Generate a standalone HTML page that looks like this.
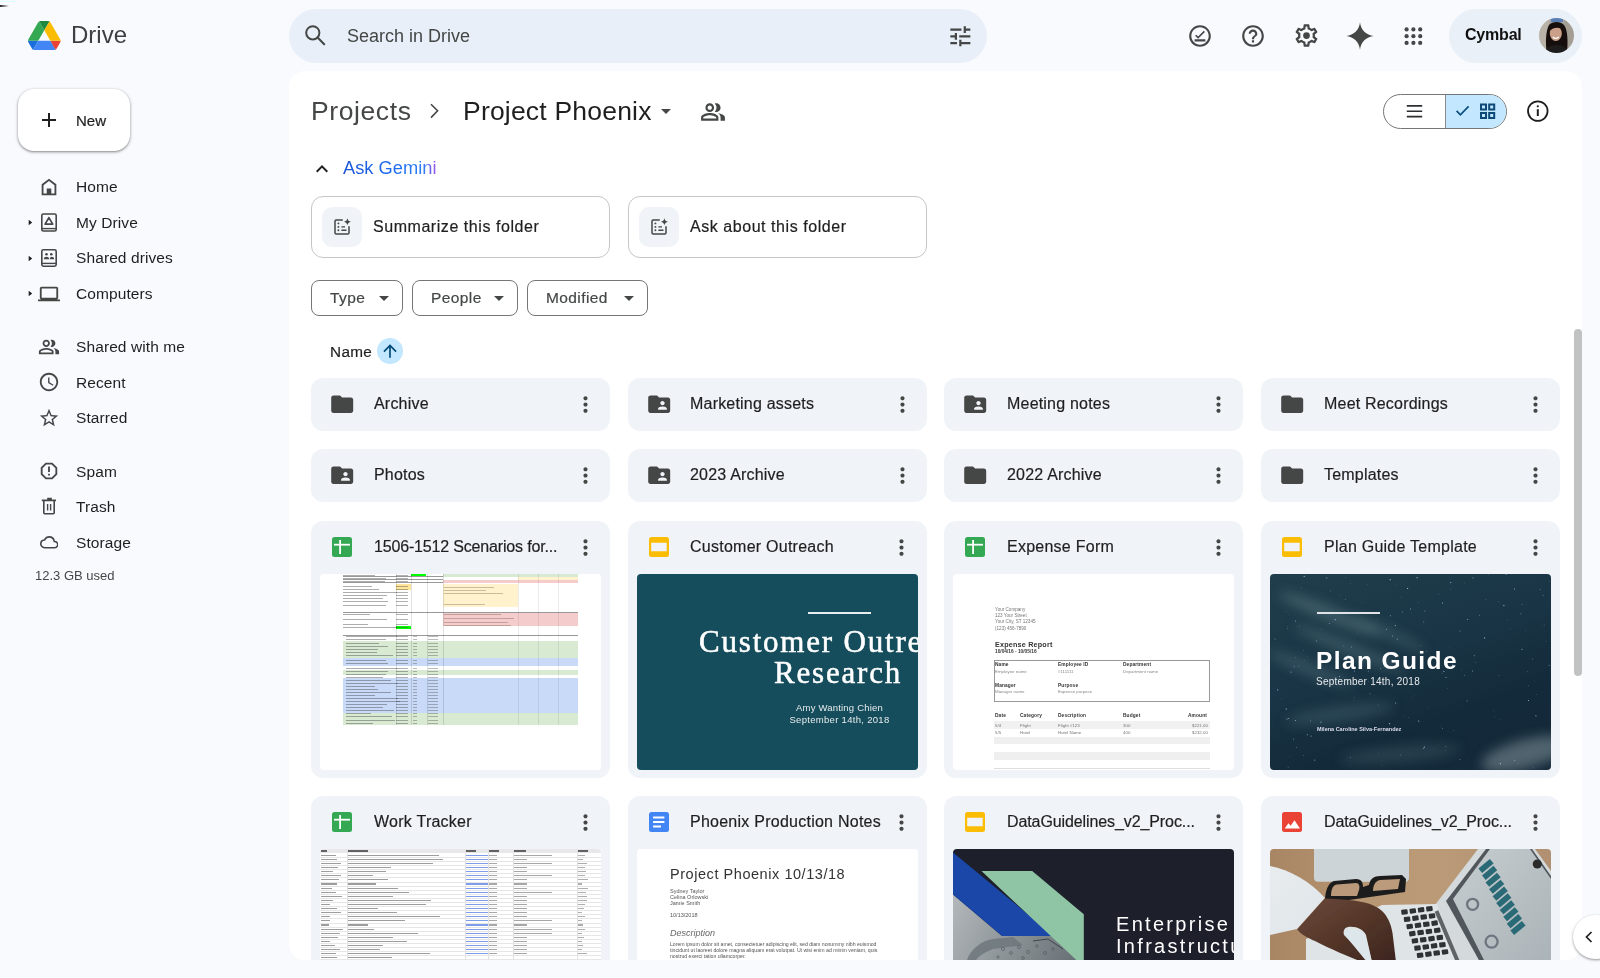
<!DOCTYPE html><html><head><meta charset="utf-8"><title>Drive</title><style>
*{margin:0;padding:0;box-sizing:border-box}
html,body{width:1600px;height:978px;overflow:hidden;background:#f8fafd;font-family:"Liberation Sans", sans-serif;}
.t{position:absolute;white-space:nowrap;line-height:1;will-change:transform;}
.m{-webkit-text-stroke:0.2px currentColor;}
.ic{position:absolute;}
.abs{position:absolute;}
.card{position:absolute;background:#f0f4f9;border-radius:12px;}
.thumb{position:absolute;overflow:hidden;border-radius:4px;}
</style></head><body>
<div class="abs" style="left:0;top:1px;width:17px;height:1px;background:#dcfdff"></div>
<div class="abs" style="left:0;top:5px;width:9px;height:2px;background:linear-gradient(90deg,#222,rgba(0,0,0,0))"></div>
<svg class="ic" style="left:28.2px;top:21px;width:32.6px;height:29.2px" viewBox="0 0 87.3 78" preserveAspectRatio="none">
<path d="m6.6 66.85 3.85 6.65c.8 1.4 1.95 2.5 3.3 3.3l13.75-23.8h-27.5c0 1.55.4 3.1 1.2 4.5z" fill="#1a6fdc"/>
<path d="m43.65 25-13.75-23.8c-1.35.8-2.5 1.9-3.3 3.3l-25.4 44a9.06 9.06 0 0 0 -1.2 4.5h27.5z" fill="#34a853"/>
<path d="m73.55 76.8c1.35-.8 2.5-1.9 3.3-3.3l1.6-2.75 7.65-13.25c.8-1.4 1.2-2.95 1.2-4.5h-27.502l5.852 11.5z" fill="#ea4335"/>
<path d="m43.65 25 13.75-23.8c-1.35-.8-2.9-1.2-4.5-1.2h-18.5c-1.6 0-3.15.45-4.5 1.2z" fill="#1e8a3e"/>
<path d="m59.8 53h-32.3l-13.75 23.8c1.35.8 2.9 1.2 4.5 1.2h50.8c1.6 0 3.15-.45 4.5-1.2z" fill="#4285f4"/>
<path d="m73.4 26.5-12.7-22c-.8-1.4-1.95-2.5-3.3-3.3l-13.75 23.8 16.15 28h27.45c0-1.55-.4-3.1-1.2-4.5z" fill="#fbbc04"/>
</svg>
<div class="t" style="left:71px;top:23.3px;font-size:24px;color:#3c4043;">Drive</div>
<div class="abs" style="left:289px;top:9px;width:698px;height:54px;border-radius:27px;background:#e9eff8"></div>
<svg class="ic" style="left:303px;top:23px;width:24px;height:24px" viewBox="0 0 24 24"><circle cx="9.8" cy="9.8" r="6.6" fill="none" stroke="#444746" stroke-width="2"/><path d="M14.6 14.6L21.2 21.2" stroke="#444746" stroke-width="2.1" stroke-linecap="round"/></svg>
<div class="t" style="left:347px;top:27.1px;font-size:18px;color:#444746;">Search in Drive</div>
<svg class="ic" style="left:946.7px;top:22.7px;width:26.7px;height:26.7px;" viewBox="0 0 24 24"><path fill="#444746" d="M3 17v2h6v-2H3zM3 5v2h10V5H3zm10 16v-2h8v-2h-8v-2h-2v6h2zM7 9v2H3v2h4v2h2V9H7zm14 4v-2H11v2h10zm-6-4h2V7h4V5h-4V3h-2v6z"/></svg>
<svg class="ic" style="left:1187px;top:23px;width:26px;height:26px;" viewBox="0 0 24 24"><path fill="#444746" d="M12 2C6.5 2 2 6.5 2 12s4.5 10 10 10 10-4.5 10-10S17.5 2 12 2zm0 18c-4.41 0-8-3.59-8-8s3.59-8 8-8 8 3.59 8 8-3.59 8-8 8zM7 17h10v-2H7v2zm3.25-4.5L8.5 10.75 7.44 11.8l2.81 2.81 6.31-6.31L15.5 7.25z"/></svg>
<svg class="ic" style="left:1240px;top:23px;width:26px;height:26px;" viewBox="0 0 24 24"><path fill="#444746" d="M11 18h2v-2h-2v2zm1-16C6.48 2 2 6.48 2 12s4.48 10 10 10 10-4.48 10-10S17.52 2 12 2zm0 18c-4.41 0-8-3.59-8-8s3.59-8 8-8 8 3.59 8 8-3.59 8-8 8zm0-14c-2.21 0-4 1.79-4 4h2c0-1.1.9-2 2-2s2 .9 2 2c0 2-3 1.75-3 5h2c0-2.25 3-2.5 3-5 0-2.21-1.79-4-4-4z"/></svg>
<svg class="ic" style="left:1293px;top:22px;width:27px;height:27px;" viewBox="0 0 24 24"><path fill="#444746" d="M19.43 12.98c.04-.32.07-.64.07-.98 0-.34-.03-.66-.07-.98l2.11-1.65c.19-.15.24-.42.12-.64l-2-3.46a.5.5 0 0 0-.61-.22l-2.49 1c-.52-.4-1.08-.73-1.69-.98l-.38-2.65A.488.488 0 0 0 14 2h-4c-.25 0-.46.18-.49.42l-.38 2.65c-.61.25-1.17.59-1.69.98l-2.49-1a.566.566 0 0 0-.18-.03c-.17 0-.34.09-.43.25l-2 3.46c-.13.22-.07.49.12.64l2.11 1.65c-.04.32-.07.65-.07.98 0 .33.03.66.07.98l-2.11 1.65c-.19.15-.24.42-.12.64l2 3.46a.5.5 0 0 0 .61.22l2.49-1c.52.4 1.08.73 1.69.98l.38 2.65c.03.24.24.42.49.42h4c.25 0 .46-.18.49-.42l.38-2.65c.61-.25 1.17-.59 1.69-.98l2.49 1c.06.02.12.03.18.03.17 0 .34-.09.43-.25l2-3.46c.12-.22.07-.49-.12-.64l-2.11-1.65zm-1.98-1.71c.04.31.05.52.05.73 0 .21-.02.43-.05.73l-.14 1.13.89.7 1.08.84-.7 1.21-1.27-.51-1.04-.42-.9.68c-.43.32-.84.56-1.25.73l-1.06.43-.16 1.13-.2 1.35h-1.4l-.19-1.35-.16-1.130-1.06-.43c-.43-.18-.83-.41-1.23-.71l-.91-.7-1.06.43-1.27.51-.7-1.21 1.08-.84.89-.7-.14-1.13c-.03-.31-.05-.54-.05-.74s.02-.43.05-.73l.14-1.13-.89-.7-1.08-.84.7-1.21 1.27.51 1.04.42.9-.68c.43-.32.84-.56 1.25-.73l1.06-.43.16-1.13.2-1.35h1.39l.19 1.35.16 1.13 1.06.43c.43.18.83.41 1.23.71l.91.7 1.060-.43 1.27-.51.7 1.21-1.07.85-.89.7.14 1.13zM12 9a3 3 0 1 0 0 6 3 3 0 0 0 0-6z"/></svg>
<svg class="ic" style="left:1344.6px;top:20.8px;width:30px;height:30px;" viewBox="0 0 24 24"><path fill="#444746" d="M12 1C12.6 7 17 11.4 23 12 17 12.6 12.6 17 12 23 11.4 17 7 12.6 1 12 7 11.4 11.4 7 12 1z"/></svg>
<svg class="ic" style="left:0;top:0;width:1600px;height:80px"><circle cx="1406.6" cy="29.4" r="2.1" fill="#444746"/><circle cx="1406.6" cy="36.15" r="2.1" fill="#444746"/><circle cx="1406.6" cy="42.9" r="2.1" fill="#444746"/><circle cx="1413.3999999999999" cy="29.4" r="2.1" fill="#444746"/><circle cx="1413.3999999999999" cy="36.15" r="2.1" fill="#444746"/><circle cx="1413.3999999999999" cy="42.9" r="2.1" fill="#444746"/><circle cx="1420.1999999999998" cy="29.4" r="2.1" fill="#444746"/><circle cx="1420.1999999999998" cy="36.15" r="2.1" fill="#444746"/><circle cx="1420.1999999999998" cy="42.9" r="2.1" fill="#444746"/></svg>
<div class="abs" style="left:1449px;top:9px;width:133px;height:54px;border-radius:27px;background:#eaf0f8"></div>
<div class="t" style="left:1465px;top:26.5px;font-size:16px;color:#111;font-weight:bold;letter-spacing:-0.2px">Cymbal</div>
<svg class="ic" style="left:1539px;top:18px;width:35px;height:35px" viewBox="0 0 35 35">
<defs><clipPath id="av"><circle cx="17.5" cy="17.5" r="17.5"/></clipPath><filter id="avb"><feGaussianBlur stdDeviation="0.5"/></filter></defs>
<g clip-path="url(#av)" filter="url(#avb)">
<rect width="35" height="35" fill="#a9a8a4"/>
<rect x="0" y="0" width="10" height="35" fill="#b9b2a8"/>
<rect x="25" y="0" width="10" height="35" fill="#a49d94"/>
<rect x="12" y="0" width="12" height="4" fill="#5a7fb5"/>
<path d="M8 35 C6 25 7 12 10 7 C13 3 22 3 25 7 C29 12 29 25 28 35Z" fill="#17110e"/>
<ellipse cx="16.8" cy="15.5" rx="6" ry="7.6" fill="#caa08a"/>
<path d="M13.8 19 Q16.8 21.8 19.8 19" stroke="#fff" stroke-width="1.2" fill="none"/>
<path d="M11 10 C13 6 22 5 25 10 L24 12 C21 9 15 9 12 12Z" fill="#17110e"/>
<path d="M5 35 C8 28 12 27 17.5 27 C23 27 27 28 30 35Z" fill="#1e1a1a"/>
</g></svg>
<div class="abs" style="left:18px;top:89px;width:112px;height:62px;border-radius:16px;background:#fff;box-shadow:0 1px 2px rgba(0,0,0,.3),0 1px 3px 1px rgba(0,0,0,.15)"></div>
<svg class="ic" style="left:37px;top:108px;width:24px;height:24px;" viewBox="0 0 24 24"><path fill="#1f1f1f" d="M19 13h-6v6h-2v-6H5v-2h6V5h2v6h6v2z"/></svg>
<div class="t m" style="left:76px;top:113.3px;font-size:15px;color:#1f1f1f;">New</div>
<svg class="ic" style="left:38px;top:176px;width:22px;height:22px;" viewBox="0 0 24 24"><path fill="#444746" d="M4 21V9l8-6 8 6v12H4zm2-2h12v-9l-6-4.5L6 10v9zm3.5 0v-5.5h5V19z"/></svg>
<div class="t" style="left:75.5px;top:179.3px;font-size:15.5px;color:#1f1f1f;letter-spacing:0.1px;">Home</div>
<svg class="ic" style="left:0;top:0;width:80px;height:300px" viewBox="0 0 80 300"><rect x="41.8" y="214" width="14.4" height="17" rx="1.6" fill="none" stroke="#444746" stroke-width="1.6"/><path d="M42 228.6h14" stroke="#444746" stroke-width="1.4"/><path d="M48.9 217.6L45.1 224.1H52.7Z" fill="none" stroke="#444746" stroke-width="1.7" stroke-linejoin="round"/></svg>
<svg class="ic" style="left:26px;top:218.0px;width:8px;height:8px" viewBox="0 0 8 8"><path fill="#1f1f1f" d="M2.7 1.7l3.5 2.8-3.5 2.8z"/></svg>
<div class="t" style="left:75.5px;top:214.8px;font-size:15.5px;color:#1f1f1f;letter-spacing:0.1px;">My Drive</div>
<svg class="ic" style="left:0;top:0;width:80px;height:300px" viewBox="0 0 80 300"><rect x="41.8" y="249.8" width="14.4" height="16.4" rx="1.6" fill="none" stroke="#444746" stroke-width="1.6"/><path d="M42 263.4h14" stroke="#444746" stroke-width="1.4"/><circle cx="46.5" cy="254.2" r="1.3" fill="#444746"/><circle cx="51.3" cy="254.2" r="1.3" fill="#444746"/><path d="M43.8 259.2c0-1.6 1.5-2.4 2.7-2.4s2.7.8 2.7 2.4zM49.8 259.2c0-1.3.8-2.4 1.9-2.4 1.2 0 2.5.8 2.5 2.4z" fill="#444746"/></svg>
<svg class="ic" style="left:26px;top:253.5px;width:8px;height:8px" viewBox="0 0 8 8"><path fill="#1f1f1f" d="M2.7 1.7l3.5 2.8-3.5 2.8z"/></svg>
<div class="t" style="left:75.5px;top:250.3px;font-size:15.5px;color:#1f1f1f;letter-spacing:0.1px;">Shared drives</div>
<svg class="ic" style="left:38px;top:282.6px;width:22px;height:22px;" viewBox="0 0 24 24"><path fill="#444746" d="M20 18c1.1 0 1.99-.9 1.99-2L22 6c0-1.1-.9-2-2-2H4c-1.1 0-2 .9-2 2v10c0 1.1.9 2 2 2H0v2h24v-2h-4zM4 6h16v10H4V6z"/></svg>
<svg class="ic" style="left:26px;top:289.1px;width:8px;height:8px" viewBox="0 0 8 8"><path fill="#1f1f1f" d="M2.7 1.7l3.5 2.8-3.5 2.8z"/></svg>
<div class="t" style="left:75.5px;top:285.9px;font-size:15.5px;color:#1f1f1f;letter-spacing:0.1px;">Computers</div>
<svg class="ic" style="left:38px;top:335.7px;width:22px;height:22px;" viewBox="0 0 24 24"><path fill="#444746" d="M16.67 13.13C18.04 14.06 19 15.32 19 17v3h4v-3c0-2.18-3.57-3.47-6.33-3.87zM15 12c2.21 0 4-1.79 4-4s-1.79-4-4-4c-.47 0-.91.1-1.33.24a5.98 5.98 0 0 1 0 7.52c.42.14.86.24 1.33.24zm-6 0c2.21 0 4-1.79 4-4s-1.79-4-4-4-4 1.79-4 4 1.790 4 4 4zm0-6c1.1 0 2 .9 2 2s-.9 2-2 2-2-.9-2-2 .9-2 2-2zm0 7c-2.67 0-8 1.34-8 4v3h16v-3c0-2.66-5.33-4-8-4zm6 5H3v-.99C3.2 16.29 6.3 15 9 15s5.8 1.29 6 2v1z"/></svg>
<div class="t" style="left:75.5px;top:339.0px;font-size:15.5px;color:#1f1f1f;letter-spacing:0.1px;">Shared with me</div>
<svg class="ic" style="left:38px;top:371.3px;width:22px;height:22px;" viewBox="0 0 24 24"><path fill="#444746" d="M11.99 2C6.47 2 2 6.48 2 12s4.47 10 9.99 10C17.52 22 22 17.52 22 12S17.52 2 11.99 2zM12 20c-4.42 0-8-3.58-8-8s3.58-8 8-8 8 3.58 8 8-3.58 8-8 8zm.5-13H11v6l5.25 3.15.75-1.23-4.5-2.67z"/></svg>
<div class="t" style="left:75.5px;top:374.6px;font-size:15.5px;color:#1f1f1f;letter-spacing:0.1px;">Recent</div>
<svg class="ic" style="left:38px;top:406.8px;width:22px;height:22px;" viewBox="0 0 24 24"><path fill="#444746" d="M22 9.24l-7.19-.62L12 2 9.19 8.63 2 9.24l5.46 4.73L5.82 21 12 17.27 18.18 21l-1.63-7.03L22 9.24zM12 15.4l-3.76 2.27 1-4.28-3.32-2.88 4.38-.38L12 6.1l1.71 4.04 4.38.38-3.32 2.88 1 4.28L12 15.4z"/></svg>
<div class="t" style="left:75.5px;top:410.1px;font-size:15.5px;color:#1f1f1f;letter-spacing:0.1px;">Starred</div>
<svg class="ic" style="left:38px;top:460.3px;width:22px;height:22px;" viewBox="0 0 24 24"><path fill="#444746" d="M15.73 3H8.27L3 8.27v7.46L8.27 21h7.46L21 15.73V8.27L15.73 3zM19 14.9L14.9 19H9.1L5 14.9V9.1L9.1 5h5.8L19 9.1v5.8zM11 7h2v6h-2zm0 8h2v2h-2z"/></svg>
<div class="t" style="left:75.5px;top:463.6px;font-size:15.5px;color:#1f1f1f;letter-spacing:0.1px;">Spam</div>
<svg class="ic" style="left:0;top:400px;width:80px;height:130px" viewBox="0 400 80 130"><path d="M41.8 500.4h14.2M47.2 498.6h4.6" stroke="#444746" stroke-width="1.6"/><path d="M43.8 501v11.8a.9.9 0 0 0 .9.9h8.6a.9.9 0 0 0 .9-.9V501" fill="none" stroke="#444746" stroke-width="1.6"/><path d="M47.6 504v6.6M50.6 504v6.6" stroke="#444746" stroke-width="1.4"/></svg>
<div class="t" style="left:75.5px;top:499.3px;font-size:15.5px;color:#1f1f1f;letter-spacing:0.1px;">Trash</div>
<svg class="ic" style="left:39.6px;top:532.6px;width:18.5px;height:18.5px;" viewBox="0 0 24 24"><path fill="#444746" d="M19.35 10.04A7.49 7.49 0 0 0 12 4C9.11 4 6.6 5.64 5.35 8.04A5.994 5.994 0 0 0 0 14c0 3.31 2.69 6 6 6h13c2.76 0 5-2.24 5-5 0-2.64-2.05-4.78-4.65-4.96zM19 18H6c-2.21 0-4-1.79-4-4 0-2.05 1.53-3.76 3.56-3.97l1.07-.11.5-.95A5.469 5.469 0 0 1 12 6c2.62 0 4.88 1.86 5.39 4.43l.3 1.5 1.53.11A2.98 2.98 0 0 1 22 15c0 1.65-1.35 3-3 3z"/></svg>
<div class="t" style="left:75.5px;top:534.8px;font-size:15.5px;color:#1f1f1f;letter-spacing:0.1px;">Storage</div>
<div class="t" style="left:35.4px;top:568.6px;font-size:13px;color:#444746;">12.3 GB used</div>
<div class="abs" style="left:289px;top:71px;width:1293px;height:889px;border-radius:16px;background:#fff"></div>
<div class="t" style="left:311px;top:97.9px;font-size:26.5px;color:#444746;letter-spacing:0.6px;">Projects</div>
<svg class="ic" style="left:423px;top:99px;width:24px;height:24px" viewBox="0 0 24 24"><path d="M8 5.2L14.6 11.8 8 18.6" fill="none" stroke="#444746" stroke-width="1.6"/></svg>
<div class="t" style="left:463px;top:97.9px;font-size:26.5px;color:#1f1f1f;letter-spacing:0.2px;">Project Phoenix</div>
<svg class="ic" style="left:654px;top:99px;width:24px;height:24px;" viewBox="0 0 24 24"><path fill="#444746" d="M7 10l5 5 5-5z"/></svg>
<svg class="ic" style="left:700px;top:99px;width:26px;height:26px;" viewBox="0 0 24 24"><path fill="#444746" d="M16.67 13.13C18.04 14.06 19 15.32 19 17v3h4v-3c0-2.18-3.57-3.47-6.33-3.87zM15 12c2.21 0 4-1.79 4-4s-1.79-4-4-4c-.47 0-.91.1-1.33.24a5.98 5.98 0 0 1 0 7.52c.42.14.86.24 1.33.24zm-6 0c2.21 0 4-1.79 4-4s-1.79-4-4-4-4 1.79-4 4 1.790 4 4 4zm0-6c1.1 0 2 .9 2 2s-.9 2-2 2-2-.9-2-2 .9-2 2-2zm0 7c-2.67 0-8 1.34-8 4v3h16v-3c0-2.66-5.33-4-8-4zm6 5H3v-.99C3.2 16.29 6.3 15 9 15s5.8 1.29 6 2v1z"/></svg>
<div class="abs" style="left:1383px;top:93.5px;width:124px;height:35.5px;border-radius:18px;border:1px solid #747775;overflow:hidden;background:#fff"><div class="abs" style="left:61px;top:0;width:62px;height:35px;background:#c2e7ff;border-left:1px solid #8a8c8b"></div></div>
<svg class="ic" style="left:0;top:0;width:1600px;height:140px" viewBox="0 0 1600 140"><path d="M1406.8 105.9h15.4M1406.8 111.2h15.4M1406.8 116.6h15.4" stroke="#2d2f31" stroke-width="1.6"/><path d="M1456.6 110.8l3.8 4 8.2-8.4" fill="none" stroke="#0b4f80" stroke-width="1.7"/><path d="M1481 104.6h5v5h-5zM1489.2 104.6h5v5h-5zM1481 112.9h5v5h-5zM1489.2 112.9h5v5h-5z" fill="none" stroke="#0b4a78" stroke-width="2"/><circle cx="1537.8" cy="111.1" r="9.8" fill="none" stroke="#1f1f1f" stroke-width="1.8"/><path d="M1537.8 109.2v6.8" stroke="#1f1f1f" stroke-width="2"/><circle cx="1537.8" cy="106.3" r="1.1" fill="#1f1f1f"/></svg>
<svg class="ic" style="left:310px;top:157px;width:24px;height:24px;" viewBox="0 0 24 24"><path fill="#1f1f1f" d="M12 8l-6 6 1.41 1.41L12 10.83l4.59 4.58L18 14z"/></svg>
<div class="t" style="left:342.5px;top:159.1px;font-size:18.3px;background:linear-gradient(90deg,#1a53d6 0%,#1b6cf0 55%,#2b7ef5 86%,#7b5cf0 96%,#9b5be8 100%);-webkit-background-clip:text;background-clip:text;color:transparent">Ask Gemini</div>
<div class="abs" style="left:311px;top:196px;width:299px;height:62px;border-radius:12px;border:1px solid #c4c7c5;background:#fff"></div><div class="abs" style="left:322px;top:207px;width:40px;height:40px;border-radius:10px;background:#f0f4f9"></div><svg class="ic" style="left:332px;top:217px;width:20px;height:20px" viewBox="0 0 20 20"><path fill="none" stroke="#444746" stroke-width="1.5" d="M10.8 3H4.2A1.2 1.2 0 0 0 3 4.2v11.6A1.2 1.2 0 0 0 4.2 17h11.6a1.2 1.2 0 0 0 1.2-1.2V9.2"/><circle cx="6.4" cy="6.4" r="0.95" fill="#444746"/><circle cx="6.4" cy="9.9" r="0.95" fill="#444746"/><circle cx="6.4" cy="13.3" r="0.95" fill="#444746"/><path fill="#444746" d="M9.4 9.2h3.6v1.4H9.4zm0 3.4h5.1v1.4H9.4z"/><path fill="#444746" d="M15.4 1.3Q15.9 4.3 18.9 4.8 15.9 5.3 15.4 8.3 14.9 5.3 11.9 4.8 14.9 4.3 15.4 1.3Z"/></svg><div class="t m" style="left:373px;top:218.8px;font-size:16px;color:#1f1f1f;letter-spacing:0.55px;">Summarize this folder</div>
<div class="abs" style="left:628px;top:196px;width:299px;height:62px;border-radius:12px;border:1px solid #c4c7c5;background:#fff"></div><div class="abs" style="left:639px;top:207px;width:40px;height:40px;border-radius:10px;background:#f0f4f9"></div><svg class="ic" style="left:649px;top:217px;width:20px;height:20px" viewBox="0 0 20 20"><path fill="none" stroke="#444746" stroke-width="1.5" d="M10.8 3H4.2A1.2 1.2 0 0 0 3 4.2v11.6A1.2 1.2 0 0 0 4.2 17h11.6a1.2 1.2 0 0 0 1.2-1.2V9.2"/><circle cx="6.4" cy="6.4" r="0.95" fill="#444746"/><circle cx="6.4" cy="9.9" r="0.95" fill="#444746"/><circle cx="6.4" cy="13.3" r="0.95" fill="#444746"/><path fill="#444746" d="M9.4 9.2h3.6v1.4H9.4zm0 3.4h5.1v1.4H9.4z"/><path fill="#444746" d="M15.4 1.3Q15.9 4.3 18.9 4.8 15.9 5.3 15.4 8.3 14.9 5.3 11.9 4.8 14.9 4.3 15.4 1.3Z"/></svg><div class="t m" style="left:690px;top:218.8px;font-size:16px;color:#1f1f1f;letter-spacing:0.55px;">Ask about this folder</div>
<div class="abs" style="left:311px;top:280px;width:92px;height:36px;border-radius:8px;border:1px solid #747775"></div>
<div class="t m" style="left:330px;top:290.1px;font-size:15.5px;color:#444746;letter-spacing:0.4px;">Type</div>
<svg class="ic" style="left:372px;top:286px;width:24px;height:24px;" viewBox="0 0 24 24"><path fill="#444746" d="M7 10l5 5 5-5z"/></svg>
<div class="abs" style="left:412px;top:280px;width:106px;height:36px;border-radius:8px;border:1px solid #747775"></div>
<div class="t m" style="left:431px;top:290.1px;font-size:15.5px;color:#444746;letter-spacing:0.4px;">People</div>
<svg class="ic" style="left:487px;top:286px;width:24px;height:24px;" viewBox="0 0 24 24"><path fill="#444746" d="M7 10l5 5 5-5z"/></svg>
<div class="abs" style="left:527px;top:280px;width:121px;height:36px;border-radius:8px;border:1px solid #747775"></div>
<div class="t m" style="left:546px;top:290.1px;font-size:15.5px;color:#444746;letter-spacing:0.4px;">Modified</div>
<svg class="ic" style="left:617px;top:286px;width:24px;height:24px;" viewBox="0 0 24 24"><path fill="#444746" d="M7 10l5 5 5-5z"/></svg>
<div class="t m" style="left:330px;top:344.0px;font-size:15.3px;color:#1f1f1f;letter-spacing:0.35px;">Name</div>
<div class="abs" style="left:377px;top:338px;width:26px;height:26px;border-radius:50%;background:#c2e7ff"></div>
<svg class="ic" style="left:380px;top:341px;width:20px;height:20px;" viewBox="0 0 24 24"><path fill="#004a77" d="M4 12l1.41 1.41L11 7.83V20h2V7.83l5.58 5.59L20 12l-8-8-8 8z"/></svg>
<div class="card" style="left:311px;top:378px;width:299px;height:53px"></div>
<svg class="ic" style="left:328.8px;top:391.2px;width:26.4px;height:26.4px;" viewBox="0 0 24 24"><path fill="#444746" d="M10 4H4c-1.1 0-1.99.9-1.99 2L2 18c0 1.1.9 2 2 2h16c1.1 0 2-.9 2-2V8c0-1.1-.9-2-2-2h-8l-2-2z"/></svg>
<div class="t m" style="left:373.5px;top:396.3px;font-size:16px;color:#1f1f1f;letter-spacing:0.2px;">Archive</div>
<svg class="ic" style="left:572.8px;top:392.3px;width:25px;height:25px;" viewBox="0 0 24 24"><path fill="#444746" d="M12 8c1.1 0 2-.9 2-2s-.9-2-2-2-2 .9-2 2 .9 2 2 2zm0 2c-1.1 0-2 .9-2 2s.9 2 2 2 2-.9 2-2-.9-2-2-2zm0 6c-1.1 0-2 .9-2 2s.9 2 2 2 2-.9 2-2-.9-2-2-2z"/></svg>
<div class="card" style="left:627.67px;top:378px;width:299px;height:53px"></div>
<svg class="ic" style="left:645.5px;top:391.2px;width:26.4px;height:26.4px;" viewBox="0 0 24 24"><path fill="#444746" d="M20 6h-8l-2-2H4c-1.1 0-1.99.9-1.99 2L2 18c0 1.1.9 2 2 2h16c1.1 0 2-.9 2-2V8c0-1.1-.9-2-2-2zm-5 3c1.1 0 2 .9 2 2s-.9 2-2 2-2-.9-2-2 .9-2 2-2zm4 8h-8v-1c0-1.33 2.67-2 4-2s4 .67 4 2v1z"/></svg>
<div class="t m" style="left:690.2px;top:396.3px;font-size:16px;color:#1f1f1f;letter-spacing:0.2px;">Marketing assets</div>
<svg class="ic" style="left:889.5px;top:392.3px;width:25px;height:25px;" viewBox="0 0 24 24"><path fill="#444746" d="M12 8c1.1 0 2-.9 2-2s-.9-2-2-2-2 .9-2 2 .9 2 2 2zm0 2c-1.1 0-2 .9-2 2s.9 2 2 2 2-.9 2-2-.9-2-2-2zm0 6c-1.1 0-2 .9-2 2s.9 2 2 2 2-.9 2-2-.9-2-2-2z"/></svg>
<div class="card" style="left:944.33px;top:378px;width:299px;height:53px"></div>
<svg class="ic" style="left:962.1px;top:391.2px;width:26.4px;height:26.4px;" viewBox="0 0 24 24"><path fill="#444746" d="M20 6h-8l-2-2H4c-1.1 0-1.99.9-1.99 2L2 18c0 1.1.9 2 2 2h16c1.1 0 2-.9 2-2V8c0-1.1-.9-2-2-2zm-5 3c1.1 0 2 .9 2 2s-.9 2-2 2-2-.9-2-2 .9-2 2-2zm4 8h-8v-1c0-1.33 2.67-2 4-2s4 .67 4 2v1z"/></svg>
<div class="t m" style="left:1006.8px;top:396.3px;font-size:16px;color:#1f1f1f;letter-spacing:0.2px;">Meeting notes</div>
<svg class="ic" style="left:1206.1px;top:392.3px;width:25px;height:25px;" viewBox="0 0 24 24"><path fill="#444746" d="M12 8c1.1 0 2-.9 2-2s-.9-2-2-2-2 .9-2 2 .9 2 2 2zm0 2c-1.1 0-2 .9-2 2s.9 2 2 2 2-.9 2-2-.9-2-2-2zm0 6c-1.1 0-2 .9-2 2s.9 2 2 2 2-.9 2-2-.9-2-2-2z"/></svg>
<div class="card" style="left:1261px;top:378px;width:299px;height:53px"></div>
<svg class="ic" style="left:1278.8px;top:391.2px;width:26.4px;height:26.4px;" viewBox="0 0 24 24"><path fill="#444746" d="M10 4H4c-1.1 0-1.99.9-1.99 2L2 18c0 1.1.9 2 2 2h16c1.1 0 2-.9 2-2V8c0-1.1-.9-2-2-2h-8l-2-2z"/></svg>
<div class="t m" style="left:1323.5px;top:396.3px;font-size:16px;color:#1f1f1f;letter-spacing:0.2px;">Meet Recordings</div>
<svg class="ic" style="left:1522.8px;top:392.3px;width:25px;height:25px;" viewBox="0 0 24 24"><path fill="#444746" d="M12 8c1.1 0 2-.9 2-2s-.9-2-2-2-2 .9-2 2 .9 2 2 2zm0 2c-1.1 0-2 .9-2 2s.9 2 2 2 2-.9 2-2-.9-2-2-2zm0 6c-1.1 0-2 .9-2 2s.9 2 2 2 2-.9 2-2-.9-2-2-2z"/></svg>
<div class="card" style="left:311px;top:449px;width:299px;height:53px"></div>
<svg class="ic" style="left:328.8px;top:462.2px;width:26.4px;height:26.4px;" viewBox="0 0 24 24"><path fill="#444746" d="M20 6h-8l-2-2H4c-1.1 0-1.99.9-1.99 2L2 18c0 1.1.9 2 2 2h16c1.1 0 2-.9 2-2V8c0-1.1-.9-2-2-2zm-5 3c1.1 0 2 .9 2 2s-.9 2-2 2-2-.9-2-2 .9-2 2-2zm4 8h-8v-1c0-1.33 2.67-2 4-2s4 .67 4 2v1z"/></svg>
<div class="t m" style="left:373.5px;top:467.3px;font-size:16px;color:#1f1f1f;letter-spacing:0.2px;">Photos</div>
<svg class="ic" style="left:572.8px;top:463.3px;width:25px;height:25px;" viewBox="0 0 24 24"><path fill="#444746" d="M12 8c1.1 0 2-.9 2-2s-.9-2-2-2-2 .9-2 2 .9 2 2 2zm0 2c-1.1 0-2 .9-2 2s.9 2 2 2 2-.9 2-2-.9-2-2-2zm0 6c-1.1 0-2 .9-2 2s.9 2 2 2 2-.9 2-2-.9-2-2-2z"/></svg>
<div class="card" style="left:627.67px;top:449px;width:299px;height:53px"></div>
<svg class="ic" style="left:645.5px;top:462.2px;width:26.4px;height:26.4px;" viewBox="0 0 24 24"><path fill="#444746" d="M20 6h-8l-2-2H4c-1.1 0-1.99.9-1.99 2L2 18c0 1.1.9 2 2 2h16c1.1 0 2-.9 2-2V8c0-1.1-.9-2-2-2zm-5 3c1.1 0 2 .9 2 2s-.9 2-2 2-2-.9-2-2 .9-2 2-2zm4 8h-8v-1c0-1.33 2.67-2 4-2s4 .67 4 2v1z"/></svg>
<div class="t m" style="left:690.2px;top:467.3px;font-size:16px;color:#1f1f1f;letter-spacing:0.2px;">2023 Archive</div>
<svg class="ic" style="left:889.5px;top:463.3px;width:25px;height:25px;" viewBox="0 0 24 24"><path fill="#444746" d="M12 8c1.1 0 2-.9 2-2s-.9-2-2-2-2 .9-2 2 .9 2 2 2zm0 2c-1.1 0-2 .9-2 2s.9 2 2 2 2-.9 2-2-.9-2-2-2zm0 6c-1.1 0-2 .9-2 2s.9 2 2 2 2-.9 2-2-.9-2-2-2z"/></svg>
<div class="card" style="left:944.33px;top:449px;width:299px;height:53px"></div>
<svg class="ic" style="left:962.1px;top:462.2px;width:26.4px;height:26.4px;" viewBox="0 0 24 24"><path fill="#444746" d="M10 4H4c-1.1 0-1.99.9-1.99 2L2 18c0 1.1.9 2 2 2h16c1.1 0 2-.9 2-2V8c0-1.1-.9-2-2-2h-8l-2-2z"/></svg>
<div class="t m" style="left:1006.8px;top:467.3px;font-size:16px;color:#1f1f1f;letter-spacing:0.2px;">2022 Archive</div>
<svg class="ic" style="left:1206.1px;top:463.3px;width:25px;height:25px;" viewBox="0 0 24 24"><path fill="#444746" d="M12 8c1.1 0 2-.9 2-2s-.9-2-2-2-2 .9-2 2 .9 2 2 2zm0 2c-1.1 0-2 .9-2 2s.9 2 2 2 2-.9 2-2-.9-2-2-2zm0 6c-1.1 0-2 .9-2 2s.9 2 2 2 2-.9 2-2-.9-2-2-2z"/></svg>
<div class="card" style="left:1261px;top:449px;width:299px;height:53px"></div>
<svg class="ic" style="left:1278.8px;top:462.2px;width:26.4px;height:26.4px;" viewBox="0 0 24 24"><path fill="#444746" d="M10 4H4c-1.1 0-1.99.9-1.99 2L2 18c0 1.1.9 2 2 2h16c1.1 0 2-.9 2-2V8c0-1.1-.9-2-2-2h-8l-2-2z"/></svg>
<div class="t m" style="left:1323.5px;top:467.3px;font-size:16px;color:#1f1f1f;letter-spacing:0.2px;">Templates</div>
<svg class="ic" style="left:1522.8px;top:463.3px;width:25px;height:25px;" viewBox="0 0 24 24"><path fill="#444746" d="M12 8c1.1 0 2-.9 2-2s-.9-2-2-2-2 .9-2 2 .9 2 2 2zm0 2c-1.1 0-2 .9-2 2s.9 2 2 2 2-.9 2-2-.9-2-2-2zm0 6c-1.1 0-2 .9-2 2s.9 2 2 2 2-.9 2-2-.9-2-2-2z"/></svg>
<div class="abs" style="left:0;top:0;width:1600px;height:960px;overflow:hidden">
<div class="card" style="left:311px;top:521px;width:299px;height:257px"></div><svg class="ic" style="left:332px;top:537px;width:20px;height:20px" viewBox="0 0 20 20"><rect width="20" height="20" rx="2.5" fill="#34a853"/><path fill="#fff" d="M7.2 3h1.8v14H7.2z"/><path fill="#fff" d="M2 6.8h16v1.8H2z"/></svg><div class="t m" style="left:373.5px;top:539.0px;font-size:16px;color:#1f1f1f;letter-spacing:-0.16999999999999998px;">1506-1512 Scenarios for...</div><svg class="ic" style="left:572.6px;top:534.8px;width:25px;height:25px;" viewBox="0 0 24 24"><path fill="#444746" d="M12 8c1.1 0 2-.9 2-2s-.9-2-2-2-2 .9-2 2 .9 2 2 2zm0 2c-1.1 0-2 .9-2 2s.9 2 2 2 2-.9 2-2-.9-2-2-2zm0 6c-1.1 0-2 .9-2 2s.9 2 2 2 2-.9 2-2-.9-2-2-2z"/></svg><div class="thumb" style="left:320px;top:573.5px;width:281px;height:196px"><div class="abs" style="left:0px;top:0px;width:281px;height:196px;background:#fff;"></div><div class="abs" style="left:123px;top:0px;width:135px;height:3.5px;background:#d9ead3;"></div><div class="abs" style="left:91px;top:0.6px;width:15px;height:2.6px;background:#00ff00;"></div><div class="abs" style="left:123px;top:6px;width:135px;height:3px;background:#f4cccc;"></div><div class="abs" style="left:198px;top:3.5px;width:60px;height:2.5px;background:#fff2cc;"></div><div class="abs" style="left:76px;top:10px;width:15px;height:6.5px;background:#ffe599;"></div><div class="abs" style="left:123px;top:10px;width:75px;height:23px;background:#fff2cc;"></div><div class="abs" style="left:123px;top:38px;width:135px;height:14.6px;background:#f4cccc;"></div><div class="abs" style="left:76px;top:52.6px;width:15px;height:2.6px;background:#00ff00;"></div><div class="abs" style="left:23px;top:67px;width:235px;height:17px;background:#d9ead3;"></div><div class="abs" style="left:23px;top:84.6px;width:235px;height:8.4px;background:#c9daf8;"></div><div class="abs" style="left:23px;top:96px;width:235px;height:5.6px;background:#d9ead3;"></div><div class="abs" style="left:23px;top:104px;width:235px;height:35px;background:#c9daf8;"></div><div class="abs" style="left:23px;top:139px;width:235px;height:12px;background:#d9ead3;"></div><div class="abs" style="left:23px;top:2.2px;width:100px;height:0.7px;background:#999;"></div><div class="abs" style="left:23px;top:5px;width:100px;height:0.7px;background:#999;"></div><div class="abs" style="left:23px;top:8px;width:100px;height:0.7px;background:#999;"></div><div class="abs" style="left:23px;top:38px;width:235px;height:0.7px;background:#999;"></div><div class="abs" style="left:23px;top:61px;width:235px;height:0.7px;background:#999;"></div><div class="abs" style="left:23px;top:1.5px;width:32px;height:1.1px;background:rgba(60,60,60,.42);"></div><div class="abs" style="left:76px;top:1.5px;width:12px;height:1.1px;background:rgba(60,60,60,.4);"></div><div class="abs" style="left:23px;top:4.5px;width:43px;height:1.1px;background:rgba(60,60,60,.42);"></div><div class="abs" style="left:76px;top:4.5px;width:12px;height:1.1px;background:rgba(60,60,60,.4);"></div><div class="abs" style="left:23px;top:7.5px;width:42px;height:1.1px;background:rgba(60,60,60,.42);"></div><div class="abs" style="left:76px;top:7.5px;width:12px;height:1.1px;background:rgba(60,60,60,.4);"></div><div class="abs" style="left:23px;top:12px;width:29px;height:1.1px;background:rgba(60,60,60,.42);"></div><div class="abs" style="left:76px;top:12px;width:12px;height:1.1px;background:rgba(60,60,60,.4);"></div><div class="abs" style="left:23px;top:15px;width:36px;height:1.1px;background:rgba(60,60,60,.42);"></div><div class="abs" style="left:76px;top:15px;width:12px;height:1.1px;background:rgba(60,60,60,.4);"></div><div class="abs" style="left:23px;top:18px;width:54px;height:1.1px;background:rgba(60,60,60,.42);"></div><div class="abs" style="left:76px;top:18px;width:12px;height:1.1px;background:rgba(60,60,60,.4);"></div><div class="abs" style="left:23px;top:21px;width:44px;height:1.1px;background:rgba(60,60,60,.42);"></div><div class="abs" style="left:76px;top:21px;width:12px;height:1.1px;background:rgba(60,60,60,.4);"></div><div class="abs" style="left:23px;top:24px;width:40px;height:1.1px;background:rgba(60,60,60,.42);"></div><div class="abs" style="left:76px;top:24px;width:12px;height:1.1px;background:rgba(60,60,60,.4);"></div><div class="abs" style="left:23px;top:27px;width:45px;height:1.1px;background:rgba(60,60,60,.42);"></div><div class="abs" style="left:76px;top:27px;width:12px;height:1.1px;background:rgba(60,60,60,.4);"></div><div class="abs" style="left:23px;top:31px;width:43px;height:1.1px;background:rgba(60,60,60,.42);"></div><div class="abs" style="left:76px;top:31px;width:12px;height:1.1px;background:rgba(60,60,60,.4);"></div><div class="abs" style="left:23px;top:40px;width:27px;height:1.1px;background:rgba(60,60,60,.42);"></div><div class="abs" style="left:76px;top:40px;width:12px;height:1.1px;background:rgba(60,60,60,.4);"></div><div class="abs" style="left:23px;top:45px;width:44px;height:1.1px;background:rgba(60,60,60,.42);"></div><div class="abs" style="left:76px;top:45px;width:12px;height:1.1px;background:rgba(60,60,60,.4);"></div><div class="abs" style="left:23px;top:50px;width:25px;height:1.1px;background:rgba(60,60,60,.42);"></div><div class="abs" style="left:76px;top:50px;width:12px;height:1.1px;background:rgba(60,60,60,.4);"></div><div class="abs" style="left:23px;top:53.5px;width:54px;height:1.1px;background:rgba(60,60,60,.42);"></div><div class="abs" style="left:76px;top:53.5px;width:12px;height:1.1px;background:rgba(60,60,60,.4);"></div><div class="abs" style="left:26px;top:62.5px;width:51px;height:1.1px;background:rgba(60,60,60,.42);"></div><div class="abs" style="left:76px;top:62.5px;width:12px;height:1.1px;background:rgba(60,60,60,.4);"></div><div class="abs" style="left:93px;top:62.5px;width:4px;height:1.1px;background:rgba(60,60,60,.35);"></div><div class="abs" style="left:108px;top:62.5px;width:10px;height:1.1px;background:rgba(60,60,60,.35);"></div><div class="abs" style="left:26px;top:65.5px;width:40px;height:1.1px;background:rgba(60,60,60,.42);"></div><div class="abs" style="left:76px;top:65.5px;width:12px;height:1.1px;background:rgba(60,60,60,.4);"></div><div class="abs" style="left:93px;top:65.5px;width:4px;height:1.1px;background:rgba(60,60,60,.35);"></div><div class="abs" style="left:108px;top:65.5px;width:10px;height:1.1px;background:rgba(60,60,60,.35);"></div><div class="abs" style="left:26px;top:69px;width:33px;height:1.1px;background:rgba(60,60,60,.42);"></div><div class="abs" style="left:76px;top:69px;width:12px;height:1.1px;background:rgba(60,60,60,.4);"></div><div class="abs" style="left:93px;top:69px;width:4px;height:1.1px;background:rgba(60,60,60,.35);"></div><div class="abs" style="left:108px;top:69px;width:10px;height:1.1px;background:rgba(60,60,60,.35);"></div><div class="abs" style="left:26px;top:72px;width:42px;height:1.1px;background:rgba(60,60,60,.42);"></div><div class="abs" style="left:76px;top:72px;width:12px;height:1.1px;background:rgba(60,60,60,.4);"></div><div class="abs" style="left:93px;top:72px;width:4px;height:1.1px;background:rgba(60,60,60,.35);"></div><div class="abs" style="left:108px;top:72px;width:10px;height:1.1px;background:rgba(60,60,60,.35);"></div><div class="abs" style="left:26px;top:75px;width:32px;height:1.1px;background:rgba(60,60,60,.42);"></div><div class="abs" style="left:76px;top:75px;width:12px;height:1.1px;background:rgba(60,60,60,.4);"></div><div class="abs" style="left:93px;top:75px;width:4px;height:1.1px;background:rgba(60,60,60,.35);"></div><div class="abs" style="left:108px;top:75px;width:10px;height:1.1px;background:rgba(60,60,60,.35);"></div><div class="abs" style="left:26px;top:78px;width:31px;height:1.1px;background:rgba(60,60,60,.42);"></div><div class="abs" style="left:76px;top:78px;width:12px;height:1.1px;background:rgba(60,60,60,.4);"></div><div class="abs" style="left:93px;top:78px;width:4px;height:1.1px;background:rgba(60,60,60,.35);"></div><div class="abs" style="left:108px;top:78px;width:10px;height:1.1px;background:rgba(60,60,60,.35);"></div><div class="abs" style="left:26px;top:81.5px;width:47px;height:1.1px;background:rgba(60,60,60,.42);"></div><div class="abs" style="left:76px;top:81.5px;width:12px;height:1.1px;background:rgba(60,60,60,.4);"></div><div class="abs" style="left:93px;top:81.5px;width:4px;height:1.1px;background:rgba(60,60,60,.35);"></div><div class="abs" style="left:108px;top:81.5px;width:10px;height:1.1px;background:rgba(60,60,60,.35);"></div><div class="abs" style="left:26px;top:86px;width:40px;height:1.1px;background:rgba(60,60,60,.42);"></div><div class="abs" style="left:76px;top:86px;width:12px;height:1.1px;background:rgba(60,60,60,.4);"></div><div class="abs" style="left:93px;top:86px;width:4px;height:1.1px;background:rgba(60,60,60,.35);"></div><div class="abs" style="left:108px;top:86px;width:10px;height:1.1px;background:rgba(60,60,60,.35);"></div><div class="abs" style="left:26px;top:89px;width:42px;height:1.1px;background:rgba(60,60,60,.42);"></div><div class="abs" style="left:76px;top:89px;width:12px;height:1.1px;background:rgba(60,60,60,.4);"></div><div class="abs" style="left:93px;top:89px;width:4px;height:1.1px;background:rgba(60,60,60,.35);"></div><div class="abs" style="left:108px;top:89px;width:10px;height:1.1px;background:rgba(60,60,60,.35);"></div><div class="abs" style="left:26px;top:94.5px;width:51px;height:1.1px;background:rgba(60,60,60,.42);"></div><div class="abs" style="left:76px;top:94.5px;width:12px;height:1.1px;background:rgba(60,60,60,.4);"></div><div class="abs" style="left:93px;top:94.5px;width:4px;height:1.1px;background:rgba(60,60,60,.35);"></div><div class="abs" style="left:108px;top:94.5px;width:10px;height:1.1px;background:rgba(60,60,60,.35);"></div><div class="abs" style="left:26px;top:97.5px;width:42px;height:1.1px;background:rgba(60,60,60,.42);"></div><div class="abs" style="left:76px;top:97.5px;width:12px;height:1.1px;background:rgba(60,60,60,.4);"></div><div class="abs" style="left:93px;top:97.5px;width:4px;height:1.1px;background:rgba(60,60,60,.35);"></div><div class="abs" style="left:108px;top:97.5px;width:10px;height:1.1px;background:rgba(60,60,60,.35);"></div><div class="abs" style="left:26px;top:100.5px;width:40px;height:1.1px;background:rgba(60,60,60,.42);"></div><div class="abs" style="left:76px;top:100.5px;width:12px;height:1.1px;background:rgba(60,60,60,.4);"></div><div class="abs" style="left:93px;top:100.5px;width:4px;height:1.1px;background:rgba(60,60,60,.35);"></div><div class="abs" style="left:108px;top:100.5px;width:10px;height:1.1px;background:rgba(60,60,60,.35);"></div><div class="abs" style="left:26px;top:103px;width:37px;height:1.1px;background:rgba(60,60,60,.42);"></div><div class="abs" style="left:76px;top:103px;width:12px;height:1.1px;background:rgba(60,60,60,.4);"></div><div class="abs" style="left:93px;top:103px;width:4px;height:1.1px;background:rgba(60,60,60,.35);"></div><div class="abs" style="left:108px;top:103px;width:10px;height:1.1px;background:rgba(60,60,60,.35);"></div><div class="abs" style="left:26px;top:106px;width:45px;height:1.1px;background:rgba(60,60,60,.42);"></div><div class="abs" style="left:76px;top:106px;width:12px;height:1.1px;background:rgba(60,60,60,.4);"></div><div class="abs" style="left:93px;top:106px;width:4px;height:1.1px;background:rgba(60,60,60,.35);"></div><div class="abs" style="left:108px;top:106px;width:10px;height:1.1px;background:rgba(60,60,60,.35);"></div><div class="abs" style="left:26px;top:109px;width:52px;height:1.1px;background:rgba(60,60,60,.42);"></div><div class="abs" style="left:76px;top:109px;width:12px;height:1.1px;background:rgba(60,60,60,.4);"></div><div class="abs" style="left:93px;top:109px;width:4px;height:1.1px;background:rgba(60,60,60,.35);"></div><div class="abs" style="left:108px;top:109px;width:10px;height:1.1px;background:rgba(60,60,60,.35);"></div><div class="abs" style="left:26px;top:112px;width:29px;height:1.1px;background:rgba(60,60,60,.42);"></div><div class="abs" style="left:76px;top:112px;width:12px;height:1.1px;background:rgba(60,60,60,.4);"></div><div class="abs" style="left:93px;top:112px;width:4px;height:1.1px;background:rgba(60,60,60,.35);"></div><div class="abs" style="left:108px;top:112px;width:10px;height:1.1px;background:rgba(60,60,60,.35);"></div><div class="abs" style="left:26px;top:115px;width:32px;height:1.1px;background:rgba(60,60,60,.42);"></div><div class="abs" style="left:76px;top:115px;width:12px;height:1.1px;background:rgba(60,60,60,.4);"></div><div class="abs" style="left:93px;top:115px;width:4px;height:1.1px;background:rgba(60,60,60,.35);"></div><div class="abs" style="left:108px;top:115px;width:10px;height:1.1px;background:rgba(60,60,60,.35);"></div><div class="abs" style="left:26px;top:118px;width:45px;height:1.1px;background:rgba(60,60,60,.42);"></div><div class="abs" style="left:76px;top:118px;width:12px;height:1.1px;background:rgba(60,60,60,.4);"></div><div class="abs" style="left:93px;top:118px;width:4px;height:1.1px;background:rgba(60,60,60,.35);"></div><div class="abs" style="left:108px;top:118px;width:10px;height:1.1px;background:rgba(60,60,60,.35);"></div><div class="abs" style="left:26px;top:121px;width:29px;height:1.1px;background:rgba(60,60,60,.42);"></div><div class="abs" style="left:76px;top:121px;width:12px;height:1.1px;background:rgba(60,60,60,.4);"></div><div class="abs" style="left:93px;top:121px;width:4px;height:1.1px;background:rgba(60,60,60,.35);"></div><div class="abs" style="left:108px;top:121px;width:10px;height:1.1px;background:rgba(60,60,60,.35);"></div><div class="abs" style="left:26px;top:124px;width:52px;height:1.1px;background:rgba(60,60,60,.42);"></div><div class="abs" style="left:76px;top:124px;width:12px;height:1.1px;background:rgba(60,60,60,.4);"></div><div class="abs" style="left:93px;top:124px;width:4px;height:1.1px;background:rgba(60,60,60,.35);"></div><div class="abs" style="left:108px;top:124px;width:10px;height:1.1px;background:rgba(60,60,60,.35);"></div><div class="abs" style="left:26px;top:127px;width:54px;height:1.1px;background:rgba(60,60,60,.42);"></div><div class="abs" style="left:76px;top:127px;width:12px;height:1.1px;background:rgba(60,60,60,.4);"></div><div class="abs" style="left:93px;top:127px;width:4px;height:1.1px;background:rgba(60,60,60,.35);"></div><div class="abs" style="left:108px;top:127px;width:10px;height:1.1px;background:rgba(60,60,60,.35);"></div><div class="abs" style="left:26px;top:130px;width:41px;height:1.1px;background:rgba(60,60,60,.42);"></div><div class="abs" style="left:76px;top:130px;width:12px;height:1.1px;background:rgba(60,60,60,.4);"></div><div class="abs" style="left:93px;top:130px;width:4px;height:1.1px;background:rgba(60,60,60,.35);"></div><div class="abs" style="left:108px;top:130px;width:10px;height:1.1px;background:rgba(60,60,60,.35);"></div><div class="abs" style="left:26px;top:133px;width:37px;height:1.1px;background:rgba(60,60,60,.42);"></div><div class="abs" style="left:76px;top:133px;width:12px;height:1.1px;background:rgba(60,60,60,.4);"></div><div class="abs" style="left:93px;top:133px;width:4px;height:1.1px;background:rgba(60,60,60,.35);"></div><div class="abs" style="left:108px;top:133px;width:10px;height:1.1px;background:rgba(60,60,60,.35);"></div><div class="abs" style="left:26px;top:136px;width:48px;height:1.1px;background:rgba(60,60,60,.42);"></div><div class="abs" style="left:76px;top:136px;width:12px;height:1.1px;background:rgba(60,60,60,.4);"></div><div class="abs" style="left:93px;top:136px;width:4px;height:1.1px;background:rgba(60,60,60,.35);"></div><div class="abs" style="left:108px;top:136px;width:10px;height:1.1px;background:rgba(60,60,60,.35);"></div><div class="abs" style="left:26px;top:139.5px;width:25px;height:1.1px;background:rgba(60,60,60,.42);"></div><div class="abs" style="left:76px;top:139.5px;width:12px;height:1.1px;background:rgba(60,60,60,.4);"></div><div class="abs" style="left:93px;top:139.5px;width:4px;height:1.1px;background:rgba(60,60,60,.35);"></div><div class="abs" style="left:108px;top:139.5px;width:10px;height:1.1px;background:rgba(60,60,60,.35);"></div><div class="abs" style="left:26px;top:142.5px;width:46px;height:1.1px;background:rgba(60,60,60,.42);"></div><div class="abs" style="left:76px;top:142.5px;width:12px;height:1.1px;background:rgba(60,60,60,.4);"></div><div class="abs" style="left:93px;top:142.5px;width:4px;height:1.1px;background:rgba(60,60,60,.35);"></div><div class="abs" style="left:108px;top:142.5px;width:10px;height:1.1px;background:rgba(60,60,60,.35);"></div><div class="abs" style="left:26px;top:146px;width:49px;height:1.1px;background:rgba(60,60,60,.42);"></div><div class="abs" style="left:76px;top:146px;width:12px;height:1.1px;background:rgba(60,60,60,.4);"></div><div class="abs" style="left:93px;top:146px;width:4px;height:1.1px;background:rgba(60,60,60,.35);"></div><div class="abs" style="left:108px;top:146px;width:10px;height:1.1px;background:rgba(60,60,60,.35);"></div><div class="abs" style="left:26px;top:149px;width:27px;height:1.1px;background:rgba(60,60,60,.42);"></div><div class="abs" style="left:76px;top:149px;width:12px;height:1.1px;background:rgba(60,60,60,.4);"></div><div class="abs" style="left:93px;top:149px;width:4px;height:1.1px;background:rgba(60,60,60,.35);"></div><div class="abs" style="left:108px;top:149px;width:10px;height:1.1px;background:rgba(60,60,60,.35);"></div><div class="abs" style="left:124px;top:13px;width:50px;height:1.0px;background:rgba(80,60,40,.3);"></div><div class="abs" style="left:124px;top:16px;width:42px;height:1.0px;background:rgba(80,60,40,.3);"></div><div class="abs" style="left:124px;top:19px;width:59px;height:1.0px;background:rgba(80,60,40,.3);"></div><div class="abs" style="left:124px;top:30px;width:41px;height:1.0px;background:rgba(80,60,40,.3);"></div><div class="abs" style="left:124px;top:40px;width:57px;height:1.0px;background:rgba(80,60,40,.3);"></div><div class="abs" style="left:124px;top:44px;width:70px;height:1.0px;background:rgba(80,60,40,.3);"></div><div class="abs" style="left:124px;top:48px;width:64px;height:1.0px;background:rgba(80,60,40,.3);"></div><div class="abs" style="left:124px;top:51px;width:67px;height:1.0px;background:rgba(80,60,40,.3);"></div><div class="abs" style="left:76px;top:0px;width:0.6px;height:151px;background:rgba(0,0,0,.12);"></div><div class="abs" style="left:91px;top:0px;width:0.6px;height:151px;background:rgba(0,0,0,.12);"></div><div class="abs" style="left:107px;top:0px;width:0.6px;height:151px;background:rgba(0,0,0,.12);"></div><div class="abs" style="left:123px;top:0px;width:0.6px;height:151px;background:rgba(0,0,0,.12);"></div><div class="abs" style="left:198px;top:0px;width:0.6px;height:151px;background:rgba(0,0,0,.08);"></div><div class="abs" style="left:218px;top:0px;width:0.6px;height:151px;background:rgba(0,0,0,.08);"></div><div class="abs" style="left:238px;top:0px;width:0.6px;height:151px;background:rgba(0,0,0,.08);"></div></div>
<div class="card" style="left:627.67px;top:521px;width:299px;height:257px"></div><svg class="ic" style="left:648.7px;top:537px;width:20px;height:20px" viewBox="0 0 20 20"><path fill="#fbbc04" fill-rule="evenodd" d="M2.5 0h15A2.5 2.5 0 0 1 20 2.5v15a2.5 2.5 0 0 1-2.5 2.5h-15A2.5 2.5 0 0 1 0 17.5v-15A2.5 2.5 0 0 1 2.5 0zM2.2 5.7v8.6h15.5V5.7z"/></svg><div class="t m" style="left:690.2px;top:539.0px;font-size:16px;color:#1f1f1f;letter-spacing:0.25px;">Customer Outreach</div><svg class="ic" style="left:889.3px;top:534.8px;width:25px;height:25px;" viewBox="0 0 24 24"><path fill="#444746" d="M12 8c1.1 0 2-.9 2-2s-.9-2-2-2-2 .9-2 2 .9 2 2 2zm0 2c-1.1 0-2 .9-2 2s.9 2 2 2 2-.9 2-2-.9-2-2-2zm0 6c-1.1 0-2 .9-2 2s.9 2 2 2 2-.9 2-2-.9-2-2-2z"/></svg><div class="thumb" style="left:636.7px;top:573.5px;width:281px;height:196px"><div class="abs" style="left:0px;top:0px;width:281px;height:196px;background:#164d5c;"></div><div class="abs" style="left:171px;top:38.5px;width:63px;height:2px;background:#e8eef0;"></div><div class="t" style="left:62px;top:52.3px;font-family:'Liberation Serif',serif;font-size:31px;color:#fff;line-height:1;letter-spacing:1.8px;-webkit-text-stroke:0.5px #fff">Customer Outreach</div><div class="t" style="left:137px;top:83.3px;font-family:'Liberation Serif',serif;font-size:31px;color:#fff;line-height:1;letter-spacing:1.8px;-webkit-text-stroke:0.5px #fff">Research</div><div class="t" style="left:0;width:405px;text-align:center;top:129.5px;font-size:9.5px;color:#e6eced;letter-spacing:0.2px">Amy Wanting Chien</div><div class="t" style="left:0;width:405px;text-align:center;top:141.5px;font-size:9.5px;color:#e6eced;letter-spacing:0.3px">September 14th, 2018</div></div>
<div class="card" style="left:944.33px;top:521px;width:299px;height:257px"></div><svg class="ic" style="left:965.3px;top:537px;width:20px;height:20px" viewBox="0 0 20 20"><rect width="20" height="20" rx="2.5" fill="#34a853"/><path fill="#fff" d="M7.2 3h1.8v14H7.2z"/><path fill="#fff" d="M2 6.8h16v1.8H2z"/></svg><div class="t m" style="left:1006.8px;top:539.0px;font-size:16px;color:#1f1f1f;letter-spacing:0.25px;">Expense Form</div><svg class="ic" style="left:1205.9px;top:534.8px;width:25px;height:25px;" viewBox="0 0 24 24"><path fill="#444746" d="M12 8c1.1 0 2-.9 2-2s-.9-2-2-2-2 .9-2 2 .9 2 2 2zm0 2c-1.1 0-2 .9-2 2s.9 2 2 2 2-.9 2-2-.9-2-2-2zm0 6c-1.1 0-2 .9-2 2s.9 2 2 2 2-.9 2-2-.9-2-2-2z"/></svg><div class="thumb" style="left:953.3px;top:573.5px;width:281px;height:196px"><div class="abs" style="left:0px;top:0px;width:281px;height:196px;background:#fff;"></div><div class="t" style="left:42px;top:34.1px;font-size:4.6px;color:#777;">Your Company</div><div class="t" style="left:42px;top:40.4px;font-size:4.6px;color:#777;">123 Your Street</div><div class="t" style="left:42px;top:46.7px;font-size:4.6px;color:#777;">Your City, ST 12345</div><div class="t" style="left:42px;top:53.0px;font-size:4.6px;color:#777;">(123) 456-7890</div><div class="t" style="left:42px;top:67.4px;font-size:7.2px;color:#333;font-weight:bold;letter-spacing:0.2px">Expense Report</div><div class="t" style="left:42px;top:76.4px;font-size:4.8px;color:#333;font-weight:bold;">10/04/16 - 10/05/16</div><div class="abs" style="left:41px;top:86.7px;width:216px;height:42px;border:1px solid #999"></div><div class="t" style="left:42px;top:89.9px;font-size:4.8px;color:#333;font-weight:bold;letter-spacing:0.15px">Name</div><div class="t" style="left:42px;top:96.3px;font-size:4.4px;color:#888;">Employee name</div><div class="t" style="left:105px;top:89.9px;font-size:4.8px;color:#333;font-weight:bold;letter-spacing:0.15px">Employee ID</div><div class="t" style="left:105px;top:96.3px;font-size:4.4px;color:#888;">#111111</div><div class="t" style="left:170px;top:89.9px;font-size:4.8px;color:#333;font-weight:bold;letter-spacing:0.15px">Department</div><div class="t" style="left:170px;top:96.3px;font-size:4.4px;color:#888;">Department name</div><div class="t" style="left:42px;top:110.4px;font-size:4.8px;color:#333;font-weight:bold;letter-spacing:0.15px">Manager</div><div class="t" style="left:42px;top:116.8px;font-size:4.4px;color:#888;">Manager name</div><div class="t" style="left:105px;top:110.4px;font-size:4.8px;color:#333;font-weight:bold;letter-spacing:0.15px">Purpose</div><div class="t" style="left:105px;top:116.8px;font-size:4.4px;color:#888;">Expense purpose</div><div class="t" style="left:42px;top:140.4px;font-size:4.8px;color:#333;font-weight:bold;letter-spacing:0.15px">Date</div><div class="t" style="left:67px;top:140.4px;font-size:4.8px;color:#333;font-weight:bold;letter-spacing:0.15px">Category</div><div class="t" style="left:105px;top:140.4px;font-size:4.8px;color:#333;font-weight:bold;letter-spacing:0.15px">Description</div><div class="t" style="left:170px;top:140.4px;font-size:4.8px;color:#333;font-weight:bold;letter-spacing:0.15px">Budget</div><div class="t" style="left:235px;top:140.4px;font-size:4.8px;color:#333;font-weight:bold;letter-spacing:0.15px">Amount</div><div class="abs" style="left:41px;top:147px;width:216px;height:8px;background:#f1f1f1;"></div><div class="abs" style="left:41px;top:163px;width:216px;height:7.5px;background:#efefef;"></div><div class="abs" style="left:41px;top:178px;width:216px;height:8px;background:#efefef;"></div><div class="abs" style="left:41px;top:194px;width:216px;height:1px;background:#ddd;"></div><div class="t" style="left:42px;top:150.3px;font-size:4.4px;color:#777;">5/4</div><div class="t" style="left:67px;top:150.3px;font-size:4.4px;color:#777;">Flight</div><div class="t" style="left:105px;top:150.3px;font-size:4.4px;color:#777;">Flight #123</div><div class="t" style="left:170px;top:150.3px;font-size:4.4px;color:#777;">300</div><div class="t" style="left:239px;top:150.3px;font-size:4.4px;color:#777;">$221.00</div><div class="t" style="left:42px;top:157.8px;font-size:4.4px;color:#777;">5/5</div><div class="t" style="left:67px;top:157.8px;font-size:4.4px;color:#777;">Hotel</div><div class="t" style="left:105px;top:157.8px;font-size:4.4px;color:#777;">Hotel Name</div><div class="t" style="left:170px;top:157.8px;font-size:4.4px;color:#777;">400</div><div class="t" style="left:239px;top:157.8px;font-size:4.4px;color:#777;">$232.00</div></div>
<div class="card" style="left:1261px;top:521px;width:299px;height:257px"></div><svg class="ic" style="left:1282px;top:537px;width:20px;height:20px" viewBox="0 0 20 20"><path fill="#fbbc04" fill-rule="evenodd" d="M2.5 0h15A2.5 2.5 0 0 1 20 2.5v15a2.5 2.5 0 0 1-2.5 2.5h-15A2.5 2.5 0 0 1 0 17.5v-15A2.5 2.5 0 0 1 2.5 0zM2.2 5.7v8.6h15.5V5.7z"/></svg><div class="t m" style="left:1323.5px;top:539.0px;font-size:16px;color:#1f1f1f;letter-spacing:0.25px;">Plan Guide Template</div><svg class="ic" style="left:1522.6px;top:534.8px;width:25px;height:25px;" viewBox="0 0 24 24"><path fill="#444746" d="M12 8c1.1 0 2-.9 2-2s-.9-2-2-2-2 .9-2 2 .9 2 2 2zm0 2c-1.1 0-2 .9-2 2s.9 2 2 2 2-.9 2-2-.9-2-2-2zm0 6c-1.1 0-2 .9-2 2s.9 2 2 2 2-.9 2-2-.9-2-2-2z"/></svg><div class="thumb" style="left:1270px;top:573.5px;width:281px;height:196px"><div class="abs" style="left:0px;top:0px;width:281px;height:196px;background:linear-gradient(160deg,#203e4c 0%,#1a3646 40%,#132a3a 70%,#15293a 100%);"></div><svg class="abs" style="left:0;top:0;width:281px;height:196px" viewBox="0 0 281 196"><defs><filter id="fg" x="-50%" y="-50%" width="200%" height="200%"><feGaussianBlur stdDeviation="6"/></filter></defs>
<g filter="url(#fg)" fill="#7d9aa0">
<ellipse cx="60" cy="40" rx="55" ry="7" transform="rotate(22 60 40)" opacity=".35"/>
<ellipse cx="80" cy="75" rx="60" ry="6" transform="rotate(22 80 75)" opacity=".3"/>
<ellipse cx="40" cy="95" rx="45" ry="6" transform="rotate(22 40 95)" opacity=".28"/>
<ellipse cx="120" cy="60" rx="40" ry="5" transform="rotate(25 120 60)" opacity=".25"/>
<ellipse cx="70" cy="140" rx="55" ry="8" transform="rotate(-8 70 140)" opacity=".22"/>
<ellipse cx="130" cy="180" rx="60" ry="8" transform="rotate(-5 130 180)" opacity=".2"/>
<ellipse cx="255" cy="180" rx="45" ry="14" transform="rotate(-15 255 180)" opacity=".45" fill="#9aabb0"/>
</g></svg><svg class="abs" style="left:0;top:0;width:281px;height:196px"><circle cx="91.0" cy="29.6" r="0.3" fill="rgba(190,205,255,0.34)"/><circle cx="150.6" cy="71.7" r="0.3" fill="rgba(190,205,255,0.85)"/><circle cx="60.3" cy="16.8" r="0.6" fill="rgba(190,205,255,0.34)"/><circle cx="25.5" cy="83.2" r="0.3" fill="rgba(190,205,255,0.87)"/><circle cx="177.2" cy="114.3" r="0.3" fill="rgba(190,205,255,0.65)"/><circle cx="111.5" cy="191.3" r="0.3" fill="rgba(190,205,255,0.63)"/><circle cx="37.4" cy="82.2" r="0.3" fill="rgba(190,205,255,0.64)"/><circle cx="157.4" cy="133.7" r="0.3" fill="rgba(190,205,255,0.65)"/><circle cx="179.5" cy="73.0" r="0.3" fill="rgba(190,205,255,0.64)"/><circle cx="173.9" cy="97.3" r="0.6" fill="rgba(190,205,255,0.77)"/><circle cx="130.8" cy="181.0" r="0.5" fill="rgba(190,205,255,0.48)"/><circle cx="223.2" cy="137.0" r="0.4" fill="rgba(190,205,255,0.35)"/><circle cx="84.4" cy="97.0" r="0.5" fill="rgba(190,205,255,0.74)"/><circle cx="80.9" cy="192.1" r="0.3" fill="rgba(190,205,255,0.61)"/><circle cx="46.4" cy="67.0" r="0.6" fill="rgba(190,205,255,0.55)"/><circle cx="270.3" cy="15.2" r="0.5" fill="rgba(190,205,255,0.50)"/><circle cx="98.4" cy="97.3" r="0.6" fill="rgba(190,205,255,0.34)"/><circle cx="26.3" cy="52.9" r="0.3" fill="rgba(190,205,255,0.34)"/><circle cx="197.1" cy="126.8" r="0.6" fill="rgba(190,205,255,0.47)"/><circle cx="108.4" cy="131.1" r="0.3" fill="rgba(190,205,255,0.86)"/><circle cx="99.9" cy="119.7" r="0.6" fill="rgba(190,205,255,0.34)"/><circle cx="215.9" cy="25.4" r="0.4" fill="rgba(190,205,255,0.54)"/><circle cx="257.6" cy="97.3" r="0.4" fill="rgba(190,205,255,0.57)"/><circle cx="154.4" cy="173.1" r="0.6" fill="rgba(190,205,255,0.82)"/><circle cx="78.2" cy="81.4" r="0.5" fill="rgba(190,205,255,0.71)"/><circle cx="106.9" cy="45.2" r="0.3" fill="rgba(190,205,255,0.41)"/><circle cx="65.2" cy="45.7" r="0.6" fill="rgba(190,205,255,0.80)"/><circle cx="51.2" cy="55.3" r="0.4" fill="rgba(190,205,255,0.55)"/><circle cx="103.8" cy="111.0" r="0.4" fill="rgba(190,205,255,0.71)"/><circle cx="144.9" cy="121.0" r="0.3" fill="rgba(190,205,255,0.57)"/><circle cx="244.7" cy="186.6" r="0.6" fill="rgba(190,205,255,0.54)"/><circle cx="110.7" cy="94.4" r="0.6" fill="rgba(190,205,255,0.34)"/><circle cx="18.9" cy="40.9" r="0.4" fill="rgba(190,205,255,0.37)"/><circle cx="168.8" cy="20.1" r="0.4" fill="rgba(190,205,255,0.62)"/><circle cx="266.7" cy="120.3" r="0.3" fill="rgba(190,205,255,0.82)"/><circle cx="172.6" cy="29.1" r="0.5" fill="rgba(190,205,255,0.87)"/><circle cx="169.2" cy="92.9" r="0.3" fill="rgba(190,205,255,0.81)"/><circle cx="279.1" cy="91.3" r="0.6" fill="rgba(190,205,255,0.49)"/><circle cx="40.5" cy="146.9" r="0.5" fill="rgba(190,205,255,0.59)"/><circle cx="194.5" cy="101.2" r="0.4" fill="rgba(190,205,255,0.87)"/><circle cx="148.4" cy="28.7" r="0.3" fill="rgba(190,205,255,0.75)"/><circle cx="83.8" cy="126.0" r="0.3" fill="rgba(190,205,255,0.72)"/><circle cx="73.4" cy="71.9" r="0.4" fill="rgba(190,205,255,0.51)"/><circle cx="62.6" cy="106.1" r="0.5" fill="rgba(190,205,255,0.68)"/><circle cx="172.3" cy="154.5" r="0.4" fill="rgba(190,205,255,0.78)"/><circle cx="230.0" cy="145.0" r="0.4" fill="rgba(190,205,255,0.42)"/><circle cx="138.5" cy="143.3" r="0.3" fill="rgba(190,205,255,0.77)"/><circle cx="132.7" cy="38.0" r="0.5" fill="rgba(190,205,255,0.57)"/><circle cx="263.3" cy="193.7" r="0.5" fill="rgba(190,205,255,0.35)"/><circle cx="28.7" cy="92.1" r="0.5" fill="rgba(190,205,255,0.42)"/><circle cx="175.4" cy="176.5" r="0.3" fill="rgba(190,205,255,0.59)"/><circle cx="183.5" cy="156.7" r="0.3" fill="rgba(190,205,255,0.80)"/><circle cx="33.7" cy="76.2" r="0.4" fill="rgba(190,205,255,0.59)"/><circle cx="50.2" cy="154.7" r="0.5" fill="rgba(190,205,255,0.35)"/><circle cx="265.9" cy="141.5" r="0.6" fill="rgba(190,205,255,0.54)"/><circle cx="266.0" cy="142.1" r="0.4" fill="rgba(190,205,255,0.90)"/><circle cx="7.7" cy="115.8" r="0.6" fill="rgba(190,205,255,0.78)"/><circle cx="41.1" cy="162.0" r="0.6" fill="rgba(190,205,255,0.69)"/><circle cx="98.5" cy="107.5" r="0.4" fill="rgba(190,205,255,0.31)"/><circle cx="224.6" cy="142.4" r="0.3" fill="rgba(190,205,255,0.62)"/><circle cx="262.3" cy="85.0" r="0.4" fill="rgba(190,205,255,0.80)"/><circle cx="59.3" cy="49.4" r="0.5" fill="rgba(190,205,255,0.60)"/><circle cx="214.6" cy="63.9" r="0.6" fill="rgba(190,205,255,0.80)"/><circle cx="17.1" cy="145.0" r="0.6" fill="rgba(190,205,255,0.70)"/><circle cx="229.0" cy="101.3" r="0.4" fill="rgba(190,205,255,0.62)"/><circle cx="147.1" cy="3.7" r="0.6" fill="rgba(190,205,255,0.77)"/><circle cx="171.0" cy="152.1" r="0.4" fill="rgba(190,205,255,0.40)"/><circle cx="133.1" cy="142.1" r="0.3" fill="rgba(190,205,255,0.50)"/><circle cx="145.7" cy="108.9" r="0.3" fill="rgba(190,205,255,0.83)"/><circle cx="16.0" cy="37.5" r="0.3" fill="rgba(190,205,255,0.76)"/><circle cx="142.7" cy="110.1" r="0.3" fill="rgba(190,205,255,0.57)"/><circle cx="172.1" cy="99.1" r="0.4" fill="rgba(190,205,255,0.72)"/><circle cx="127.1" cy="104.5" r="0.6" fill="rgba(190,205,255,0.60)"/><circle cx="69.6" cy="102.5" r="0.5" fill="rgba(190,205,255,0.85)"/><circle cx="250.9" cy="39.7" r="0.6" fill="rgba(190,205,255,0.38)"/><circle cx="34.2" cy="86.7" r="0.3" fill="rgba(190,205,255,0.70)"/><circle cx="120.4" cy="41.7" r="0.5" fill="rgba(190,205,255,0.77)"/><circle cx="252.1" cy="30.3" r="0.5" fill="rgba(190,205,255,0.39)"/><circle cx="248.1" cy="189.6" r="0.4" fill="rgba(190,205,255,0.75)"/><circle cx="26.4" cy="173.4" r="0.4" fill="rgba(190,205,255,0.89)"/><circle cx="233.9" cy="31.6" r="0.6" fill="rgba(190,205,255,0.90)"/><circle cx="113.5" cy="82.6" r="0.5" fill="rgba(190,205,255,0.49)"/><circle cx="202.9" cy="3.8" r="0.6" fill="rgba(190,205,255,0.56)"/><circle cx="5.1" cy="65.0" r="0.5" fill="rgba(190,205,255,0.61)"/><circle cx="18.1" cy="193.1" r="0.4" fill="rgba(190,205,255,0.88)"/><circle cx="29.4" cy="52.1" r="0.3" fill="rgba(190,205,255,0.84)"/><circle cx="51.0" cy="148.1" r="0.6" fill="rgba(190,205,255,0.81)"/><circle cx="189.9" cy="185.4" r="0.6" fill="rgba(190,205,255,0.39)"/><circle cx="258.3" cy="111.8" r="0.5" fill="rgba(190,205,255,0.35)"/><circle cx="16.2" cy="134.9" r="0.6" fill="rgba(190,205,255,0.84)"/><circle cx="75.6" cy="3.3" r="0.3" fill="rgba(190,205,255,0.78)"/><circle cx="23.5" cy="167.8" r="0.3" fill="rgba(190,205,255,0.46)"/><circle cx="34.2" cy="2.3" r="0.6" fill="rgba(190,205,255,0.86)"/><circle cx="75.3" cy="25.3" r="0.4" fill="rgba(190,205,255,0.86)"/><circle cx="272.3" cy="51.3" r="0.4" fill="rgba(190,205,255,0.42)"/><circle cx="87.7" cy="59.8" r="0.4" fill="rgba(190,205,255,0.47)"/><circle cx="140.5" cy="34.9" r="0.5" fill="rgba(190,205,255,0.78)"/><circle cx="279.5" cy="7.2" r="0.3" fill="rgba(190,205,255,0.74)"/><circle cx="154.8" cy="37.1" r="0.6" fill="rgba(190,205,255,0.45)"/><circle cx="125.6" cy="129.0" r="0.6" fill="rgba(190,205,255,0.69)"/><circle cx="153.4" cy="174.2" r="0.5" fill="rgba(190,205,255,0.71)"/><circle cx="276.1" cy="67.2" r="0.4" fill="rgba(190,205,255,0.54)"/><circle cx="97.7" cy="10.7" r="0.4" fill="rgba(190,205,255,0.31)"/><circle cx="175.8" cy="172.5" r="0.6" fill="rgba(190,205,255,0.40)"/><circle cx="23.7" cy="164.9" r="0.5" fill="rgba(190,205,255,0.66)"/><circle cx="194.6" cy="8.9" r="0.4" fill="rgba(190,205,255,0.39)"/><circle cx="125.3" cy="51.6" r="0.5" fill="rgba(190,205,255,0.88)"/><circle cx="153.7" cy="47.9" r="0.5" fill="rgba(190,205,255,0.43)"/><circle cx="51.4" cy="65.7" r="0.3" fill="rgba(190,205,255,0.58)"/><circle cx="141.3" cy="39.4" r="0.3" fill="rgba(190,205,255,0.35)"/><circle cx="229.6" cy="28.2" r="0.3" fill="rgba(190,205,255,0.54)"/><circle cx="84.2" cy="123.4" r="0.3" fill="rgba(190,205,255,0.65)"/><circle cx="148.7" cy="147.1" r="0.6" fill="rgba(190,205,255,0.76)"/><circle cx="202.5" cy="96.9" r="0.5" fill="rgba(190,205,255,0.73)"/><circle cx="180.7" cy="8.6" r="0.6" fill="rgba(190,205,255,0.74)"/><circle cx="228.2" cy="27.3" r="0.3" fill="rgba(190,205,255,0.80)"/><circle cx="164.1" cy="175.0" r="0.4" fill="rgba(190,205,255,0.35)"/><circle cx="11.8" cy="124.9" r="0.3" fill="rgba(190,205,255,0.53)"/><circle cx="126.8" cy="10.0" r="0.3" fill="rgba(190,205,255,0.68)"/><circle cx="191.3" cy="95.9" r="0.3" fill="rgba(190,205,255,0.57)"/><circle cx="19.7" cy="182.8" r="0.3" fill="rgba(190,205,255,0.70)"/><circle cx="18.6" cy="144.4" r="0.5" fill="rgba(190,205,255,0.79)"/><circle cx="237.8" cy="46.0" r="0.4" fill="rgba(190,205,255,0.44)"/><circle cx="182.6" cy="90.2" r="0.6" fill="rgba(190,205,255,0.35)"/><circle cx="255.8" cy="56.3" r="0.3" fill="rgba(190,205,255,0.67)"/><circle cx="180.6" cy="15.2" r="0.4" fill="rgba(190,205,255,0.50)"/><circle cx="183.1" cy="135.8" r="0.4" fill="rgba(190,205,255,0.31)"/><circle cx="17.0" cy="52.7" r="0.3" fill="rgba(190,205,255,0.72)"/><circle cx="189.9" cy="57.0" r="0.5" fill="rgba(190,205,255,0.58)"/><circle cx="131.0" cy="23.2" r="0.4" fill="rgba(190,205,255,0.49)"/><circle cx="24.1" cy="92.7" r="0.5" fill="rgba(190,205,255,0.58)"/><circle cx="230.4" cy="189.7" r="0.6" fill="rgba(190,205,255,0.90)"/><circle cx="108.7" cy="179.6" r="0.4" fill="rgba(190,205,255,0.34)"/><circle cx="25.4" cy="146.5" r="0.5" fill="rgba(190,205,255,0.87)"/><circle cx="37.3" cy="160.8" r="0.5" fill="rgba(190,205,255,0.83)"/><circle cx="197.6" cy="45.4" r="0.6" fill="rgba(190,205,255,0.54)"/><circle cx="44.7" cy="186.2" r="0.6" fill="rgba(190,205,255,0.54)"/><circle cx="204.3" cy="81.6" r="0.6" fill="rgba(190,205,255,0.49)"/><circle cx="236.1" cy="0.3" r="0.5" fill="rgba(190,205,255,0.80)"/><circle cx="33.7" cy="181.6" r="0.3" fill="rgba(190,205,255,0.84)"/><circle cx="81.4" cy="73.0" r="0.6" fill="rgba(190,205,255,0.53)"/><circle cx="244.5" cy="15.0" r="0.6" fill="rgba(190,205,255,0.75)"/><circle cx="240.0" cy="55.0" r="0.3" fill="rgba(190,205,255,0.80)"/><circle cx="80.3" cy="183.4" r="0.4" fill="rgba(190,205,255,0.88)"/><circle cx="122.6" cy="61.9" r="0.5" fill="rgba(190,205,255,0.77)"/><circle cx="120.2" cy="5.7" r="0.6" fill="rgba(190,205,255,0.85)"/><circle cx="264.3" cy="107.6" r="0.3" fill="rgba(190,205,255,0.33)"/><circle cx="205.8" cy="88.4" r="0.4" fill="rgba(190,205,255,0.69)"/><circle cx="80.4" cy="9.6" r="0.4" fill="rgba(190,205,255,0.40)"/><circle cx="116.6" cy="55.2" r="0.5" fill="rgba(190,205,255,0.74)"/><circle cx="274.3" cy="51.0" r="0.4" fill="rgba(190,205,255,0.48)"/><circle cx="156.6" cy="77.3" r="0.4" fill="rgba(190,205,255,0.69)"/><circle cx="21.1" cy="98.1" r="0.6" fill="rgba(190,205,255,0.63)"/><circle cx="127.3" cy="65.2" r="0.6" fill="rgba(190,205,255,0.56)"/><circle cx="153.9" cy="47.8" r="0.4" fill="rgba(190,205,255,0.51)"/><circle cx="25.6" cy="46.9" r="0.5" fill="rgba(190,205,255,0.79)"/><circle cx="56.8" cy="3.9" r="0.6" fill="rgba(190,205,255,0.53)"/><circle cx="209.6" cy="41.2" r="0.5" fill="rgba(190,205,255,0.50)"/><circle cx="17.4" cy="54.4" r="0.5" fill="rgba(190,205,255,0.38)"/><circle cx="141.5" cy="123.4" r="0.4" fill="rgba(190,205,255,0.36)"/><circle cx="252.0" cy="75.4" r="0.6" fill="rgba(190,205,255,0.56)"/><circle cx="87.7" cy="159.6" r="0.3" fill="rgba(190,205,255,0.38)"/><circle cx="119.5" cy="149.7" r="0.6" fill="rgba(190,205,255,0.88)"/><circle cx="137.6" cy="14.3" r="0.6" fill="rgba(190,205,255,0.88)"/><circle cx="69.8" cy="21.4" r="0.4" fill="rgba(190,205,255,0.39)"/><circle cx="273.1" cy="21.3" r="0.6" fill="rgba(190,205,255,0.35)"/><circle cx="218.3" cy="0.3" r="0.4" fill="rgba(190,205,255,0.44)"/><circle cx="258.5" cy="126.5" r="0.5" fill="rgba(190,205,255,0.88)"/><circle cx="176.0" cy="103.5" r="0.6" fill="rgba(190,205,255,0.72)"/><circle cx="31.5" cy="13.8" r="0.4" fill="rgba(190,205,255,0.53)"/></svg><div class="abs" style="left:46.5px;top:38.5px;width:63px;height:2px;background:#e0e4e8;"></div><div class="t" style="left:46px;top:75.3px;font-size:24.5px;color:#fff;font-weight:bold;letter-spacing:1.4px">Plan Guide</div><div class="t" style="left:46px;top:103.0px;font-size:10px;color:#e6e9ec;letter-spacing:0.25px">September 14th, 2018</div><div class="t" style="left:47px;top:153.3px;font-size:5.5px;color:#dde;font-weight:bold">Milena Caroline Silva-Fernandez</div></div>
<div class="card" style="left:311px;top:796px;width:299px;height:257px"></div><svg class="ic" style="left:332px;top:812px;width:20px;height:20px" viewBox="0 0 20 20"><rect width="20" height="20" rx="2.5" fill="#34a853"/><path fill="#fff" d="M7.2 3h1.8v14H7.2z"/><path fill="#fff" d="M2 6.8h16v1.8H2z"/></svg><div class="t m" style="left:373.5px;top:814.0px;font-size:16px;color:#1f1f1f;letter-spacing:0.25px;">Work Tracker</div><svg class="ic" style="left:572.6px;top:809.8px;width:25px;height:25px;" viewBox="0 0 24 24"><path fill="#444746" d="M12 8c1.1 0 2-.9 2-2s-.9-2-2-2-2 .9-2 2 .9 2 2 2zm0 2c-1.1 0-2 .9-2 2s.9 2 2 2 2-.9 2-2-.9-2-2-2zm0 6c-1.1 0-2 .9-2 2s.9 2 2 2 2-.9 2-2-.9-2-2-2z"/></svg><div class="thumb" style="left:320px;top:848.5px;width:281px;height:196px"><div class="abs" style="left:0px;top:0px;width:281px;height:196px;background:#fff;"></div><div class="abs" style="left:0px;top:0px;width:281px;height:4.5px;background:#e8e8e8;"></div><div class="abs" style="left:0px;top:8.4px;width:281px;height:0.5px;background:#e6e6e6;"></div><div class="abs" style="left:1px;top:6.199999999999999px;width:15px;height:1.2px;background:rgba(60,60,60,.5);"></div><div class="abs" style="left:28px;top:6.199999999999999px;width:91px;height:1.2px;background:rgba(60,60,60,.5);"></div><div class="abs" style="left:146px;top:6.199999999999999px;width:22px;height:1.2px;background:rgba(40,90,220,.6);"></div><div class="abs" style="left:169px;top:6.199999999999999px;width:8px;height:1.2px;background:rgba(60,60,60,.45);"></div><div class="abs" style="left:194px;top:6.199999999999999px;width:38px;height:1.2px;background:rgba(60,60,60,.45);"></div><div class="abs" style="left:258px;top:6.199999999999999px;width:7px;height:1.2px;background:rgba(60,60,60,.42);"></div><div class="abs" style="left:0px;top:12.499999999999998px;width:281px;height:0.5px;background:#e6e6e6;"></div><div class="abs" style="left:1px;top:10.299999999999999px;width:16px;height:1.2px;background:rgba(60,60,60,.5);"></div><div class="abs" style="left:28px;top:10.299999999999999px;width:95px;height:1.2px;background:rgba(60,60,60,.5);"></div><div class="abs" style="left:146px;top:10.299999999999999px;width:22px;height:1.2px;background:rgba(40,90,220,.6);"></div><div class="abs" style="left:169px;top:10.299999999999999px;width:8px;height:1.2px;background:rgba(60,60,60,.45);"></div><div class="abs" style="left:194px;top:10.299999999999999px;width:13px;height:1.2px;background:rgba(60,60,60,.45);"></div><div class="abs" style="left:258px;top:10.299999999999999px;width:5px;height:1.2px;background:rgba(60,60,60,.42);"></div><div class="abs" style="left:0px;top:16.6px;width:281px;height:0.5px;background:#e6e6e6;"></div><div class="abs" style="left:1px;top:14.4px;width:20px;height:1.2px;background:rgba(60,60,60,.5);"></div><div class="abs" style="left:28px;top:14.4px;width:85px;height:1.2px;background:rgba(60,60,60,.5);"></div><div class="abs" style="left:146px;top:14.4px;width:22px;height:1.2px;background:rgba(40,90,220,.6);"></div><div class="abs" style="left:169px;top:14.4px;width:8px;height:1.2px;background:rgba(60,60,60,.45);"></div><div class="abs" style="left:194px;top:14.4px;width:38px;height:1.2px;background:rgba(60,60,60,.45);"></div><div class="abs" style="left:258px;top:14.4px;width:9px;height:1.2px;background:rgba(60,60,60,.42);"></div><div class="abs" style="left:0px;top:20.7px;width:281px;height:0.5px;background:#e6e6e6;"></div><div class="abs" style="left:1px;top:18.499999999999996px;width:17px;height:1.2px;background:rgba(60,60,60,.5);"></div><div class="abs" style="left:28px;top:18.499999999999996px;width:43px;height:1.2px;background:rgba(60,60,60,.5);"></div><div class="abs" style="left:146px;top:18.499999999999996px;width:22px;height:1.2px;background:rgba(40,90,220,.6);"></div><div class="abs" style="left:169px;top:18.499999999999996px;width:8px;height:1.2px;background:rgba(60,60,60,.45);"></div><div class="abs" style="left:194px;top:18.499999999999996px;width:13px;height:1.2px;background:rgba(60,60,60,.45);"></div><div class="abs" style="left:258px;top:18.499999999999996px;width:7px;height:1.2px;background:rgba(60,60,60,.42);"></div><div class="abs" style="left:0px;top:24.8px;width:281px;height:0.5px;background:#e6e6e6;"></div><div class="abs" style="left:1px;top:22.599999999999998px;width:12px;height:1.2px;background:rgba(60,60,60,.5);"></div><div class="abs" style="left:28px;top:22.599999999999998px;width:38px;height:1.2px;background:rgba(60,60,60,.5);"></div><div class="abs" style="left:146px;top:22.599999999999998px;width:22px;height:1.2px;background:rgba(40,90,220,.6);"></div><div class="abs" style="left:169px;top:22.599999999999998px;width:8px;height:1.2px;background:rgba(60,60,60,.45);"></div><div class="abs" style="left:194px;top:22.599999999999998px;width:13px;height:1.2px;background:rgba(60,60,60,.45);"></div><div class="abs" style="left:258px;top:22.599999999999998px;width:8px;height:1.2px;background:rgba(60,60,60,.42);"></div><div class="abs" style="left:0px;top:28.900000000000002px;width:281px;height:0.5px;background:#e6e6e6;"></div><div class="abs" style="left:1px;top:26.7px;width:20px;height:1.2px;background:rgba(60,60,60,.5);"></div><div class="abs" style="left:28px;top:26.7px;width:25px;height:1.2px;background:rgba(60,60,60,.5);"></div><div class="abs" style="left:146px;top:26.7px;width:22px;height:1.2px;background:rgba(40,90,220,.6);"></div><div class="abs" style="left:169px;top:26.7px;width:8px;height:1.2px;background:rgba(60,60,60,.45);"></div><div class="abs" style="left:194px;top:26.7px;width:38px;height:1.2px;background:rgba(60,60,60,.45);"></div><div class="abs" style="left:258px;top:26.7px;width:7px;height:1.2px;background:rgba(60,60,60,.42);"></div><div class="abs" style="left:0px;top:33.0px;width:281px;height:0.5px;background:#e6e6e6;"></div><div class="abs" style="left:1px;top:30.799999999999997px;width:18px;height:1.2px;background:rgba(60,60,60,.5);"></div><div class="abs" style="left:28px;top:30.799999999999997px;width:40px;height:1.2px;background:rgba(60,60,60,.5);"></div><div class="abs" style="left:146px;top:30.799999999999997px;width:22px;height:1.2px;background:rgba(40,90,220,.6);"></div><div class="abs" style="left:169px;top:30.799999999999997px;width:8px;height:1.2px;background:rgba(60,60,60,.45);"></div><div class="abs" style="left:194px;top:30.799999999999997px;width:13px;height:1.2px;background:rgba(60,60,60,.45);"></div><div class="abs" style="left:258px;top:30.799999999999997px;width:10px;height:1.2px;background:rgba(60,60,60,.42);"></div><div class="abs" style="left:0px;top:37.099999999999994px;width:281px;height:0.5px;background:#e6e6e6;"></div><div class="abs" style="left:1px;top:34.89999999999999px;width:16px;height:1.2px;background:rgba(60,60,60,.5);"></div><div class="abs" style="left:28px;top:34.89999999999999px;width:28px;height:1.2px;background:rgba(60,60,60,.5);"></div><div class="abs" style="left:146px;top:34.89999999999999px;width:22px;height:1.2px;background:rgba(40,90,220,.6);"></div><div class="abs" style="left:169px;top:34.89999999999999px;width:8px;height:1.2px;background:rgba(60,60,60,.45);"></div><div class="abs" style="left:194px;top:34.89999999999999px;width:13px;height:1.2px;background:rgba(60,60,60,.45);"></div><div class="abs" style="left:258px;top:34.89999999999999px;width:4px;height:1.2px;background:rgba(60,60,60,.42);"></div><div class="abs" style="left:0px;top:41.199999999999996px;width:281px;height:0.5px;background:#e6e6e6;"></div><div class="abs" style="left:1px;top:38.99999999999999px;width:11px;height:1.2px;background:rgba(60,60,60,.5);"></div><div class="abs" style="left:28px;top:38.99999999999999px;width:50px;height:1.2px;background:rgba(60,60,60,.5);"></div><div class="abs" style="left:146px;top:38.99999999999999px;width:22px;height:1.2px;background:rgba(40,90,220,.6);"></div><div class="abs" style="left:169px;top:38.99999999999999px;width:8px;height:1.2px;background:rgba(60,60,60,.45);"></div><div class="abs" style="left:194px;top:38.99999999999999px;width:13px;height:1.2px;background:rgba(60,60,60,.45);"></div><div class="abs" style="left:258px;top:38.99999999999999px;width:10px;height:1.2px;background:rgba(60,60,60,.42);"></div><div class="abs" style="left:0px;top:45.3px;width:281px;height:0.5px;background:#e6e6e6;"></div><div class="abs" style="left:1px;top:43.099999999999994px;width:15px;height:1.2px;background:rgba(60,60,60,.5);"></div><div class="abs" style="left:28px;top:43.099999999999994px;width:61px;height:1.2px;background:rgba(60,60,60,.5);"></div><div class="abs" style="left:146px;top:43.099999999999994px;width:22px;height:1.2px;background:rgba(40,90,220,.6);"></div><div class="abs" style="left:169px;top:43.099999999999994px;width:8px;height:1.2px;background:rgba(60,60,60,.45);"></div><div class="abs" style="left:194px;top:43.099999999999994px;width:38px;height:1.2px;background:rgba(60,60,60,.45);"></div><div class="abs" style="left:258px;top:43.099999999999994px;width:8px;height:1.2px;background:rgba(60,60,60,.42);"></div><div class="abs" style="left:0px;top:49.4px;width:281px;height:0.5px;background:#e6e6e6;"></div><div class="abs" style="left:1px;top:47.199999999999996px;width:21px;height:1.2px;background:rgba(60,60,60,.5);"></div><div class="abs" style="left:28px;top:47.199999999999996px;width:45px;height:1.2px;background:rgba(60,60,60,.5);"></div><div class="abs" style="left:146px;top:47.199999999999996px;width:22px;height:1.2px;background:rgba(40,90,220,.6);"></div><div class="abs" style="left:169px;top:47.199999999999996px;width:8px;height:1.2px;background:rgba(60,60,60,.45);"></div><div class="abs" style="left:194px;top:47.199999999999996px;width:13px;height:1.2px;background:rgba(60,60,60,.45);"></div><div class="abs" style="left:258px;top:47.199999999999996px;width:9px;height:1.2px;background:rgba(60,60,60,.42);"></div><div class="abs" style="left:0px;top:53.49999999999999px;width:281px;height:0.5px;background:#e6e6e6;"></div><div class="abs" style="left:1px;top:51.29999999999999px;width:12px;height:1.2px;background:rgba(60,60,60,.5);"></div><div class="abs" style="left:28px;top:51.29999999999999px;width:83px;height:1.2px;background:rgba(60,60,60,.5);"></div><div class="abs" style="left:146px;top:51.29999999999999px;width:22px;height:1.2px;background:rgba(40,90,220,.6);"></div><div class="abs" style="left:169px;top:51.29999999999999px;width:8px;height:1.2px;background:rgba(60,60,60,.45);"></div><div class="abs" style="left:194px;top:51.29999999999999px;width:13px;height:1.2px;background:rgba(60,60,60,.45);"></div><div class="abs" style="left:258px;top:51.29999999999999px;width:9px;height:1.2px;background:rgba(60,60,60,.42);"></div><div class="abs" style="left:0px;top:57.599999999999994px;width:281px;height:0.5px;background:#e6e6e6;"></div><div class="abs" style="left:1px;top:55.39999999999999px;width:9px;height:1.2px;background:rgba(60,60,60,.5);"></div><div class="abs" style="left:28px;top:55.39999999999999px;width:78px;height:1.2px;background:rgba(60,60,60,.5);"></div><div class="abs" style="left:146px;top:55.39999999999999px;width:22px;height:1.2px;background:rgba(40,90,220,.6);"></div><div class="abs" style="left:169px;top:55.39999999999999px;width:8px;height:1.2px;background:rgba(60,60,60,.45);"></div><div class="abs" style="left:194px;top:55.39999999999999px;width:13px;height:1.2px;background:rgba(60,60,60,.45);"></div><div class="abs" style="left:258px;top:55.39999999999999px;width:7px;height:1.2px;background:rgba(60,60,60,.42);"></div><div class="abs" style="left:0px;top:61.699999999999996px;width:281px;height:0.5px;background:#e6e6e6;"></div><div class="abs" style="left:1px;top:59.49999999999999px;width:16px;height:1.2px;background:rgba(60,60,60,.5);"></div><div class="abs" style="left:28px;top:59.49999999999999px;width:30px;height:1.2px;background:rgba(60,60,60,.5);"></div><div class="abs" style="left:146px;top:59.49999999999999px;width:22px;height:1.2px;background:rgba(40,90,220,.6);"></div><div class="abs" style="left:169px;top:59.49999999999999px;width:8px;height:1.2px;background:rgba(60,60,60,.45);"></div><div class="abs" style="left:194px;top:59.49999999999999px;width:13px;height:1.2px;background:rgba(60,60,60,.45);"></div><div class="abs" style="left:258px;top:59.49999999999999px;width:6px;height:1.2px;background:rgba(60,60,60,.42);"></div><div class="abs" style="left:0px;top:65.79999999999998px;width:281px;height:0.5px;background:#e6e6e6;"></div><div class="abs" style="left:1px;top:63.59999999999999px;width:20px;height:1.2px;background:rgba(60,60,60,.5);"></div><div class="abs" style="left:28px;top:63.59999999999999px;width:49px;height:1.2px;background:rgba(60,60,60,.5);"></div><div class="abs" style="left:146px;top:63.59999999999999px;width:22px;height:1.2px;background:rgba(40,90,220,.6);"></div><div class="abs" style="left:169px;top:63.59999999999999px;width:8px;height:1.2px;background:rgba(60,60,60,.45);"></div><div class="abs" style="left:194px;top:63.59999999999999px;width:13px;height:1.2px;background:rgba(60,60,60,.45);"></div><div class="abs" style="left:258px;top:63.59999999999999px;width:4px;height:1.2px;background:rgba(60,60,60,.42);"></div><div class="abs" style="left:0px;top:69.89999999999999px;width:281px;height:0.5px;background:#e6e6e6;"></div><div class="abs" style="left:1px;top:67.7px;width:9px;height:1.2px;background:rgba(60,60,60,.5);"></div><div class="abs" style="left:28px;top:67.7px;width:92px;height:1.2px;background:rgba(60,60,60,.5);"></div><div class="abs" style="left:146px;top:67.7px;width:22px;height:1.2px;background:rgba(40,90,220,.6);"></div><div class="abs" style="left:169px;top:67.7px;width:8px;height:1.2px;background:rgba(60,60,60,.45);"></div><div class="abs" style="left:194px;top:67.7px;width:13px;height:1.2px;background:rgba(60,60,60,.45);"></div><div class="abs" style="left:258px;top:67.7px;width:7px;height:1.2px;background:rgba(60,60,60,.42);"></div><div class="abs" style="left:0px;top:73.99999999999999px;width:281px;height:0.5px;background:#e6e6e6;"></div><div class="abs" style="left:1px;top:71.8px;width:9px;height:1.2px;background:rgba(60,60,60,.5);"></div><div class="abs" style="left:28px;top:71.8px;width:57px;height:1.2px;background:rgba(60,60,60,.5);"></div><div class="abs" style="left:146px;top:71.8px;width:22px;height:1.2px;background:rgba(40,90,220,.6);"></div><div class="abs" style="left:169px;top:71.8px;width:8px;height:1.2px;background:rgba(60,60,60,.45);"></div><div class="abs" style="left:194px;top:71.8px;width:38px;height:1.2px;background:rgba(60,60,60,.45);"></div><div class="abs" style="left:258px;top:71.8px;width:4px;height:1.2px;background:rgba(60,60,60,.42);"></div><div class="abs" style="left:0px;top:78.09999999999998px;width:281px;height:0.5px;background:#e6e6e6;"></div><div class="abs" style="left:1px;top:75.89999999999999px;width:8px;height:1.2px;background:rgba(60,60,60,.5);"></div><div class="abs" style="left:28px;top:75.89999999999999px;width:20px;height:1.2px;background:rgba(60,60,60,.5);"></div><div class="abs" style="left:146px;top:75.89999999999999px;width:22px;height:1.2px;background:rgba(40,90,220,.6);"></div><div class="abs" style="left:169px;top:75.89999999999999px;width:8px;height:1.2px;background:rgba(60,60,60,.45);"></div><div class="abs" style="left:194px;top:75.89999999999999px;width:13px;height:1.2px;background:rgba(60,60,60,.45);"></div><div class="abs" style="left:258px;top:75.89999999999999px;width:5px;height:1.2px;background:rgba(60,60,60,.42);"></div><div class="abs" style="left:0px;top:82.19999999999999px;width:281px;height:0.5px;background:#e6e6e6;"></div><div class="abs" style="left:1px;top:80.0px;width:22px;height:1.2px;background:rgba(60,60,60,.5);"></div><div class="abs" style="left:28px;top:80.0px;width:26px;height:1.2px;background:rgba(60,60,60,.5);"></div><div class="abs" style="left:146px;top:80.0px;width:22px;height:1.2px;background:rgba(40,90,220,.6);"></div><div class="abs" style="left:169px;top:80.0px;width:8px;height:1.2px;background:rgba(60,60,60,.45);"></div><div class="abs" style="left:194px;top:80.0px;width:38px;height:1.2px;background:rgba(60,60,60,.45);"></div><div class="abs" style="left:258px;top:80.0px;width:7px;height:1.2px;background:rgba(60,60,60,.42);"></div><div class="abs" style="left:0px;top:86.29999999999998px;width:281px;height:0.5px;background:#e6e6e6;"></div><div class="abs" style="left:1px;top:84.1px;width:19px;height:1.2px;background:rgba(60,60,60,.5);"></div><div class="abs" style="left:28px;top:84.1px;width:70px;height:1.2px;background:rgba(60,60,60,.5);"></div><div class="abs" style="left:146px;top:84.1px;width:22px;height:1.2px;background:rgba(40,90,220,.6);"></div><div class="abs" style="left:169px;top:84.1px;width:8px;height:1.2px;background:rgba(60,60,60,.45);"></div><div class="abs" style="left:194px;top:84.1px;width:38px;height:1.2px;background:rgba(60,60,60,.45);"></div><div class="abs" style="left:258px;top:84.1px;width:4px;height:1.2px;background:rgba(60,60,60,.42);"></div><div class="abs" style="left:0px;top:90.39999999999999px;width:281px;height:0.5px;background:#e6e6e6;"></div><div class="abs" style="left:1px;top:88.2px;width:17px;height:1.2px;background:rgba(60,60,60,.5);"></div><div class="abs" style="left:28px;top:88.2px;width:45px;height:1.2px;background:rgba(60,60,60,.5);"></div><div class="abs" style="left:146px;top:88.2px;width:22px;height:1.2px;background:rgba(40,90,220,.6);"></div><div class="abs" style="left:169px;top:88.2px;width:8px;height:1.2px;background:rgba(60,60,60,.45);"></div><div class="abs" style="left:194px;top:88.2px;width:13px;height:1.2px;background:rgba(60,60,60,.45);"></div><div class="abs" style="left:258px;top:88.2px;width:6px;height:1.2px;background:rgba(60,60,60,.42);"></div><div class="abs" style="left:0px;top:94.49999999999999px;width:281px;height:0.5px;background:#e6e6e6;"></div><div class="abs" style="left:1px;top:92.3px;width:9px;height:1.2px;background:rgba(60,60,60,.5);"></div><div class="abs" style="left:28px;top:92.3px;width:59px;height:1.2px;background:rgba(60,60,60,.5);"></div><div class="abs" style="left:146px;top:92.3px;width:22px;height:1.2px;background:rgba(40,90,220,.6);"></div><div class="abs" style="left:169px;top:92.3px;width:8px;height:1.2px;background:rgba(60,60,60,.45);"></div><div class="abs" style="left:194px;top:92.3px;width:13px;height:1.2px;background:rgba(60,60,60,.45);"></div><div class="abs" style="left:258px;top:92.3px;width:4px;height:1.2px;background:rgba(60,60,60,.42);"></div><div class="abs" style="left:0px;top:98.59999999999998px;width:281px;height:0.5px;background:#e6e6e6;"></div><div class="abs" style="left:1px;top:96.39999999999999px;width:14px;height:1.2px;background:rgba(60,60,60,.5);"></div><div class="abs" style="left:28px;top:96.39999999999999px;width:35px;height:1.2px;background:rgba(60,60,60,.5);"></div><div class="abs" style="left:146px;top:96.39999999999999px;width:22px;height:1.2px;background:rgba(40,90,220,.6);"></div><div class="abs" style="left:169px;top:96.39999999999999px;width:8px;height:1.2px;background:rgba(60,60,60,.45);"></div><div class="abs" style="left:194px;top:96.39999999999999px;width:13px;height:1.2px;background:rgba(60,60,60,.45);"></div><div class="abs" style="left:258px;top:96.39999999999999px;width:5px;height:1.2px;background:rgba(60,60,60,.42);"></div><div class="abs" style="left:0px;top:102.69999999999999px;width:281px;height:0.5px;background:#e6e6e6;"></div><div class="abs" style="left:1px;top:100.5px;width:19px;height:1.2px;background:rgba(60,60,60,.5);"></div><div class="abs" style="left:28px;top:100.5px;width:32px;height:1.2px;background:rgba(60,60,60,.5);"></div><div class="abs" style="left:146px;top:100.5px;width:22px;height:1.2px;background:rgba(40,90,220,.6);"></div><div class="abs" style="left:169px;top:100.5px;width:8px;height:1.2px;background:rgba(60,60,60,.45);"></div><div class="abs" style="left:194px;top:100.5px;width:13px;height:1.2px;background:rgba(60,60,60,.45);"></div><div class="abs" style="left:258px;top:100.5px;width:4px;height:1.2px;background:rgba(60,60,60,.42);"></div><div class="abs" style="left:0px;top:106.79999999999998px;width:281px;height:0.5px;background:#e6e6e6;"></div><div class="abs" style="left:1px;top:104.6px;width:15px;height:1.2px;background:rgba(60,60,60,.5);"></div><div class="abs" style="left:28px;top:104.6px;width:82px;height:1.2px;background:rgba(60,60,60,.5);"></div><div class="abs" style="left:146px;top:104.6px;width:22px;height:1.2px;background:rgba(40,90,220,.6);"></div><div class="abs" style="left:169px;top:104.6px;width:8px;height:1.2px;background:rgba(60,60,60,.45);"></div><div class="abs" style="left:194px;top:104.6px;width:13px;height:1.2px;background:rgba(60,60,60,.45);"></div><div class="abs" style="left:258px;top:104.6px;width:9px;height:1.2px;background:rgba(60,60,60,.42);"></div><div class="abs" style="left:0px;top:110.89999999999998px;width:281px;height:0.5px;background:#e6e6e6;"></div><div class="abs" style="left:1px;top:108.69999999999999px;width:16px;height:1.2px;background:rgba(60,60,60,.5);"></div><div class="abs" style="left:28px;top:108.69999999999999px;width:44px;height:1.2px;background:rgba(60,60,60,.5);"></div><div class="abs" style="left:0px;top:114.99999999999999px;width:281px;height:0.5px;background:#e6e6e6;"></div><div class="abs" style="left:1px;top:112.8px;width:15px;height:1.2px;background:rgba(60,60,60,.5);"></div><div class="abs" style="left:28px;top:112.8px;width:85px;height:1.2px;background:rgba(60,60,60,.5);"></div><div class="abs" style="left:27px;top:0px;width:0.5px;height:120px;background:#e2e2e2;"></div><div class="abs" style="left:145px;top:0px;width:0.5px;height:120px;background:#e2e2e2;"></div><div class="abs" style="left:168px;top:0px;width:0.5px;height:120px;background:#e2e2e2;"></div><div class="abs" style="left:193px;top:0px;width:0.5px;height:120px;background:#e2e2e2;"></div><div class="abs" style="left:257px;top:0px;width:0.5px;height:120px;background:#e2e2e2;"></div><div class="abs" style="left:1px;top:1.5px;width:6px;height:1.5px;background:rgba(40,40,40,.7);"></div><div class="abs" style="left:28px;top:1.5px;width:20px;height:1.5px;background:rgba(40,40,40,.7);"></div><div class="abs" style="left:146px;top:1.5px;width:10px;height:1.5px;background:rgba(40,40,40,.7);"></div><div class="abs" style="left:169px;top:1.5px;width:10px;height:1.5px;background:rgba(40,40,40,.7);"></div><div class="abs" style="left:194px;top:1.5px;width:12px;height:1.5px;background:rgba(40,40,40,.7);"></div><div class="abs" style="left:258px;top:1.5px;width:10px;height:1.5px;background:rgba(40,40,40,.7);"></div></div>
<div class="card" style="left:627.67px;top:796px;width:299px;height:257px"></div><svg class="ic" style="left:648.7px;top:812px;width:20px;height:20px" viewBox="0 0 20 20"><rect width="20" height="20" rx="2.5" fill="#4285f4"/><path fill="#fff" d="M4.1 4.6h11.3v2H4.1zm0 4.5h11.3v2H4.1zm0 4.5h7.9v2H4.1z"/></svg><div class="t m" style="left:690.2px;top:814.0px;font-size:16px;color:#1f1f1f;letter-spacing:0.25px;">Phoenix Production Notes</div><svg class="ic" style="left:889.3px;top:809.8px;width:25px;height:25px;" viewBox="0 0 24 24"><path fill="#444746" d="M12 8c1.1 0 2-.9 2-2s-.9-2-2-2-2 .9-2 2 .9 2 2 2zm0 2c-1.1 0-2 .9-2 2s.9 2 2 2 2-.9 2-2-.9-2-2-2zm0 6c-1.1 0-2 .9-2 2s.9 2 2 2 2-.9 2-2-.9-2-2-2z"/></svg><div class="thumb" style="left:636.7px;top:848.5px;width:281px;height:196px"><div class="abs" style="left:0px;top:0px;width:281px;height:196px;background:#fff;"></div><div class="t" style="left:33px;top:18.4px;font-size:14.5px;color:#333;letter-spacing:0.55px">Project Phoenix 10/13/18</div><div class="t" style="left:33px;top:40.3px;font-size:5.5px;color:#555">Sydney Taylor</div><div class="t" style="left:33px;top:46.3px;font-size:5.5px;color:#555">Celina Orlowski</div><div class="t" style="left:33px;top:52.3px;font-size:5.5px;color:#555">Jamie Smith</div><div class="t" style="left:33px;top:64.7px;font-size:5.5px;color:#555">10/13/2018</div><div class="t" style="left:33px;top:80.7px;font-size:9px;color:#666;font-style:italic">Description</div><div class="t" style="left:33px;top:93.4px;font-size:5.2px;color:#555;letter-spacing:-0.02px">Lorem ipsum dolor sit amet, consectetuer adipiscing elit, sed diam nonummy nibh euismod</div><div class="t" style="left:33px;top:99.4px;font-size:5.2px;color:#555;letter-spacing:-0.02px">tincidunt ut laoreet dolore magna aliquam erat volutpat. Ut wisi enim ad minim veniam, quis</div><div class="t" style="left:33px;top:105.4px;font-size:5.2px;color:#555;letter-spacing:-0.02px">nostrud exerci tation ullamcorper.</div></div>
<div class="card" style="left:944.33px;top:796px;width:299px;height:257px"></div><svg class="ic" style="left:965.3px;top:812px;width:20px;height:20px" viewBox="0 0 20 20"><path fill="#fbbc04" fill-rule="evenodd" d="M2.5 0h15A2.5 2.5 0 0 1 20 2.5v15a2.5 2.5 0 0 1-2.5 2.5h-15A2.5 2.5 0 0 1 0 17.5v-15A2.5 2.5 0 0 1 2.5 0zM2.2 5.7v8.6h15.5V5.7z"/></svg><div class="t m" style="left:1006.8px;top:814.0px;font-size:16px;color:#1f1f1f;letter-spacing:-0.1px;">DataGuidelines_v2_Proc...</div><svg class="ic" style="left:1205.9px;top:809.8px;width:25px;height:25px;" viewBox="0 0 24 24"><path fill="#444746" d="M12 8c1.1 0 2-.9 2-2s-.9-2-2-2-2 .9-2 2 .9 2 2 2zm0 2c-1.1 0-2 .9-2 2s.9 2 2 2 2-.9 2-2-.9-2-2-2zm0 6c-1.1 0-2 .9-2 2s.9 2 2 2 2-.9 2-2-.9-2-2-2z"/></svg><div class="thumb" style="left:953.3px;top:848.5px;width:281px;height:196px"><div class="abs" style="left:0px;top:0px;width:281px;height:196px;background:#1d1f2a;"></div><svg class="abs" style="left:0;top:0;width:281px;height:196px" viewBox="0 0 281 196">
<defs><linearGradient id="pg" x1="0" y1="0" x2="1" y2="0.6"><stop offset="0" stop-color="#b3b8bb"/><stop offset="0.45" stop-color="#8d9498"/><stop offset="1" stop-color="#5d656a"/></linearGradient>
<filter id="eb"><feGaussianBlur stdDeviation="0.5"/></filter></defs>
<path d="M0 45.6 L49 87 L101 87 L133 114 L133 196 L0 196Z" fill="url(#pg)"/>
<g filter="url(#eb)">
<path d="M14 111 C18 100 28 92 40 90 L60 88 L70 96 L40 100 C30 104 24 108 22 113Z" fill="#6c7479" opacity=".8"/>
<g fill="none" stroke="#505a60" stroke-width="0.8" opacity=".8"><circle cx="50" cy="100" r="1.6"/><circle cx="58" cy="104" r="1.4"/><circle cx="66" cy="98" r="1.5"/><circle cx="75" cy="103" r="1.6"/><circle cx="84" cy="97" r="1.3"/><circle cx="92" cy="104" r="1.5"/><circle cx="45" cy="108" r="1.2"/><circle cx="70" cy="109" r="1.4"/><circle cx="100" cy="100" r="1.3"/></g>
<path d="M80 92 L95 90 L110 100" stroke="#3e464b" stroke-width="1" fill="none"/>
</g>
<path d="M0 3.4 L101 87 L49 87 L0 45.6Z" fill="#1a47a8"/>
<path d="M28.5 22.1 L79.2 22.1 L130.8 65.3 L130.8 118 Z" fill="#8fc5a5"/>
</svg><div class="t" style="left:162.5px;top:65.6px;font-size:20px;color:#fff;letter-spacing:2.3px">Enterprise</div><div class="t" style="left:162.5px;top:87.6px;font-size:20px;color:#fff;letter-spacing:2.3px">Infrastructure</div></div>
<div class="card" style="left:1261px;top:796px;width:299px;height:257px"></div><svg class="ic" style="left:1282px;top:812px;width:20px;height:20px" viewBox="0 0 20 20"><rect width="20" height="20" rx="2.5" fill="#ea4335"/><path fill="#fff" d="M2.7 16.5l3.7-5.3 2.3 2.6 3.8-5.5 5.5 8.2z"/></svg><div class="t m" style="left:1323.5px;top:814.0px;font-size:16px;color:#1f1f1f;letter-spacing:-0.1px;">DataGuidelines_v2_Proc...</div><svg class="ic" style="left:1522.6px;top:809.8px;width:25px;height:25px;" viewBox="0 0 24 24"><path fill="#444746" d="M12 8c1.1 0 2-.9 2-2s-.9-2-2-2-2 .9-2 2 .9 2 2 2zm0 2c-1.1 0-2 .9-2 2s.9 2 2 2 2-.9 2-2-.9-2-2-2zm0 6c-1.1 0-2 .9-2 2s.9 2 2 2 2-.9 2-2-.9-2-2-2z"/></svg><div class="thumb" style="left:1270px;top:848.5px;width:281px;height:196px"><div class="abs" style="left:0px;top:0px;width:281px;height:196px;background:linear-gradient(90deg,#a88563 0%,#b89774 35%,#bb9a78 60%,#b09070 100%);"></div><svg class="abs" style="left:0;top:0;width:281px;height:196px" viewBox="0 0 281 196">
<defs><filter id="bl" x="-5%" y="-5%" width="110%" height="110%"><feGaussianBlur stdDeviation="0.6"/></filter>
<linearGradient id="scr" x1="0" y1="0" x2="1" y2="1"><stop offset="0" stop-color="#c6cdd0"/><stop offset="1" stop-color="#aab3b7"/></linearGradient>
<linearGradient id="hand" x1="0" y1="0" x2="1" y2="1"><stop offset="0" stop-color="#6a4a3b"/><stop offset="0.5" stop-color="#553629"/><stop offset="1" stop-color="#3c2520"/></linearGradient>
<linearGradient id="slv" x1="0" y1="0" x2="1" y2="1"><stop offset="0" stop-color="#e8ecef"/><stop offset="1" stop-color="#dfe5e9"/></linearGradient></defs>
<g filter="url(#bl)">
<path d="M44 -5 H139 V28.8 a4 4 0 0 1 -4 4 H48 a4 4 0 0 1 -4 -4Z" fill="#ccd4d7"/>
<path d="M55 52 C55 42 58 34 64 32 L86 30 C92 30 93 34 93 38 L99 36 C100 30 104 27 110 27 L132 26 L136 30 L135 43 L100 48 L58 54Z" fill="#1d1b1b"/>
<path d="M61 47 C61 40 63 36 67 35.5 L86 34 C89 34 90 37 89 41 L87 47Z" fill="#b9997a"/>
<path d="M103 42 C103 37 105 32 110 31 L130 30 L128 40Z" fill="#bb9b7b"/>
<path d="M165 56 L208 0 L265 0 L281 22 L281 113 L184 113Z" fill="#d4d9db"/>
<path d="M176 52 L216 0 L262 0 L281 27 L281 113 L210 113Z" fill="#51575b"/>
<path d="M183 50 L220 0 L260 0 L281 30 L281 113 L215 113Z" fill="url(#scr)"/>
<circle cx="267.3" cy="15" r="4.6" fill="#2a2a2a"/>
<g fill="#2b6b77"><rect x="208.5" y="14.1" width="15" height="5.8" transform="rotate(-40 216.0 17.0)"/><rect x="212.1" y="21.0" width="15" height="5.8" transform="rotate(-40 219.6 23.9)"/><rect x="215.6" y="27.9" width="15" height="5.8" transform="rotate(-40 223.1 30.8)"/><rect x="219.2" y="34.8" width="15" height="5.8" transform="rotate(-40 226.7 37.7)"/><rect x="222.7" y="41.7" width="15" height="5.8" transform="rotate(-40 230.2 44.6)"/><rect x="226.3" y="48.5" width="15" height="5.8" transform="rotate(-40 233.8 51.4)"/><rect x="229.8" y="55.4" width="15" height="5.8" transform="rotate(-40 237.3 58.3)"/><rect x="233.4" y="62.3" width="15" height="5.8" transform="rotate(-40 240.9 65.2)"/><rect x="236.9" y="69.2" width="15" height="5.8" transform="rotate(-40 244.4 72.1)"/><rect x="240.5" y="76.1" width="15" height="5.8" transform="rotate(-40 248.0 79.0)"/></g>
<circle cx="202.6" cy="55.3" r="5.5" fill="none" stroke="#6f7480" stroke-width="2.3"/>
<circle cx="221.6" cy="92.7" r="6" fill="none" stroke="#6f7480" stroke-width="2.3"/>
<path d="M36 90 L112 56 L167 55 L188 113 L36 113Z" fill="#dfe4e6"/>
<path d="M166.5 62 L188 113" stroke="#5f6367" stroke-width="4"/>
<g fill="#2f3236"><rect x="131.0" y="61.0" width="6.4" height="5" rx="1" transform="rotate(-8 131.0 61.0)"/><rect x="139.3" y="59.9" width="6.4" height="5" rx="1" transform="rotate(-8 139.3 59.9)"/><rect x="147.6" y="58.8" width="6.4" height="5" rx="1" transform="rotate(-8 147.6 58.8)"/><rect x="155.9" y="57.7" width="6.4" height="5" rx="1" transform="rotate(-8 155.9 57.7)"/><rect x="133.6" y="68.2" width="6.4" height="5" rx="1" transform="rotate(-8 133.6 68.2)"/><rect x="141.9" y="67.1" width="6.4" height="5" rx="1" transform="rotate(-8 141.9 67.1)"/><rect x="150.2" y="66.0" width="6.4" height="5" rx="1" transform="rotate(-8 150.2 66.0)"/><rect x="158.5" y="64.9" width="6.4" height="5" rx="1" transform="rotate(-8 158.5 64.9)"/><rect x="136.2" y="75.4" width="6.4" height="5" rx="1" transform="rotate(-8 136.2 75.4)"/><rect x="144.5" y="74.3" width="6.4" height="5" rx="1" transform="rotate(-8 144.5 74.3)"/><rect x="152.8" y="73.2" width="6.4" height="5" rx="1" transform="rotate(-8 152.8 73.2)"/><rect x="161.1" y="72.1" width="6.4" height="5" rx="1" transform="rotate(-8 161.1 72.1)"/><rect x="138.8" y="82.6" width="6.4" height="5" rx="1" transform="rotate(-8 138.8 82.6)"/><rect x="147.1" y="81.5" width="6.4" height="5" rx="1" transform="rotate(-8 147.1 81.5)"/><rect x="155.4" y="80.4" width="6.4" height="5" rx="1" transform="rotate(-8 155.4 80.4)"/><rect x="163.7" y="79.3" width="6.4" height="5" rx="1" transform="rotate(-8 163.7 79.3)"/><rect x="141.4" y="89.8" width="6.4" height="5" rx="1" transform="rotate(-8 141.4 89.8)"/><rect x="149.7" y="88.7" width="6.4" height="5" rx="1" transform="rotate(-8 149.7 88.7)"/><rect x="158.0" y="87.6" width="6.4" height="5" rx="1" transform="rotate(-8 158.0 87.6)"/><rect x="166.3" y="86.5" width="6.4" height="5" rx="1" transform="rotate(-8 166.3 86.5)"/><rect x="144.0" y="97.0" width="6.4" height="5" rx="1" transform="rotate(-8 144.0 97.0)"/><rect x="152.3" y="95.9" width="6.4" height="5" rx="1" transform="rotate(-8 152.3 95.9)"/><rect x="160.6" y="94.8" width="6.4" height="5" rx="1" transform="rotate(-8 160.6 94.8)"/><rect x="168.9" y="93.7" width="6.4" height="5" rx="1" transform="rotate(-8 168.9 93.7)"/><rect x="146.6" y="104.2" width="6.4" height="5" rx="1" transform="rotate(-8 146.6 104.2)"/><rect x="154.9" y="103.1" width="6.4" height="5" rx="1" transform="rotate(-8 154.9 103.1)"/><rect x="163.2" y="102.0" width="6.4" height="5" rx="1" transform="rotate(-8 163.2 102.0)"/><rect x="171.5" y="100.9" width="6.4" height="5" rx="1" transform="rotate(-8 171.5 100.9)"/></g>
<path d="M0 17 C20 21 40 32 55 49 L27 80 L0 86Z" fill="url(#slv)"/>
<path d="M54.6 49.4 C70 50 85 51 92 53 C102 55 110 59 114 64 C119 70 122 78 123 88 L126 113 L102 113 L96 86 C93 80 86 77 78 78 C74 79 73 82 74 86 L101 113 L92 113 C80 108 60 100 45 92 C38 89 30 85 27.3 80.2Z" fill="url(#hand)"/>
<path d="M74 85 C76 80 88 79 95 85 L102 113 L97 113Z" fill="#dde6eb"/>
</g>
</svg></div>
</div>
<div class="abs" style="left:1574px;top:329px;width:8px;height:347px;border-radius:4px;background:#c1c3c2"></div>
<div class="abs" style="left:1573px;top:915px;width:46px;height:44px;border-radius:22px;background:#fff;box-shadow:0 1px 3px rgba(0,0,0,.3),0 1px 2px rgba(0,0,0,.15)"></div>
<svg class="ic" style="left:1579px;top:927px;width:20px;height:20px" viewBox="0 0 20 20"><path d="M12.5 5L7.5 10l5 5" fill="none" stroke="#1f1f1f" stroke-width="1.7"/></svg>
</body></html>
